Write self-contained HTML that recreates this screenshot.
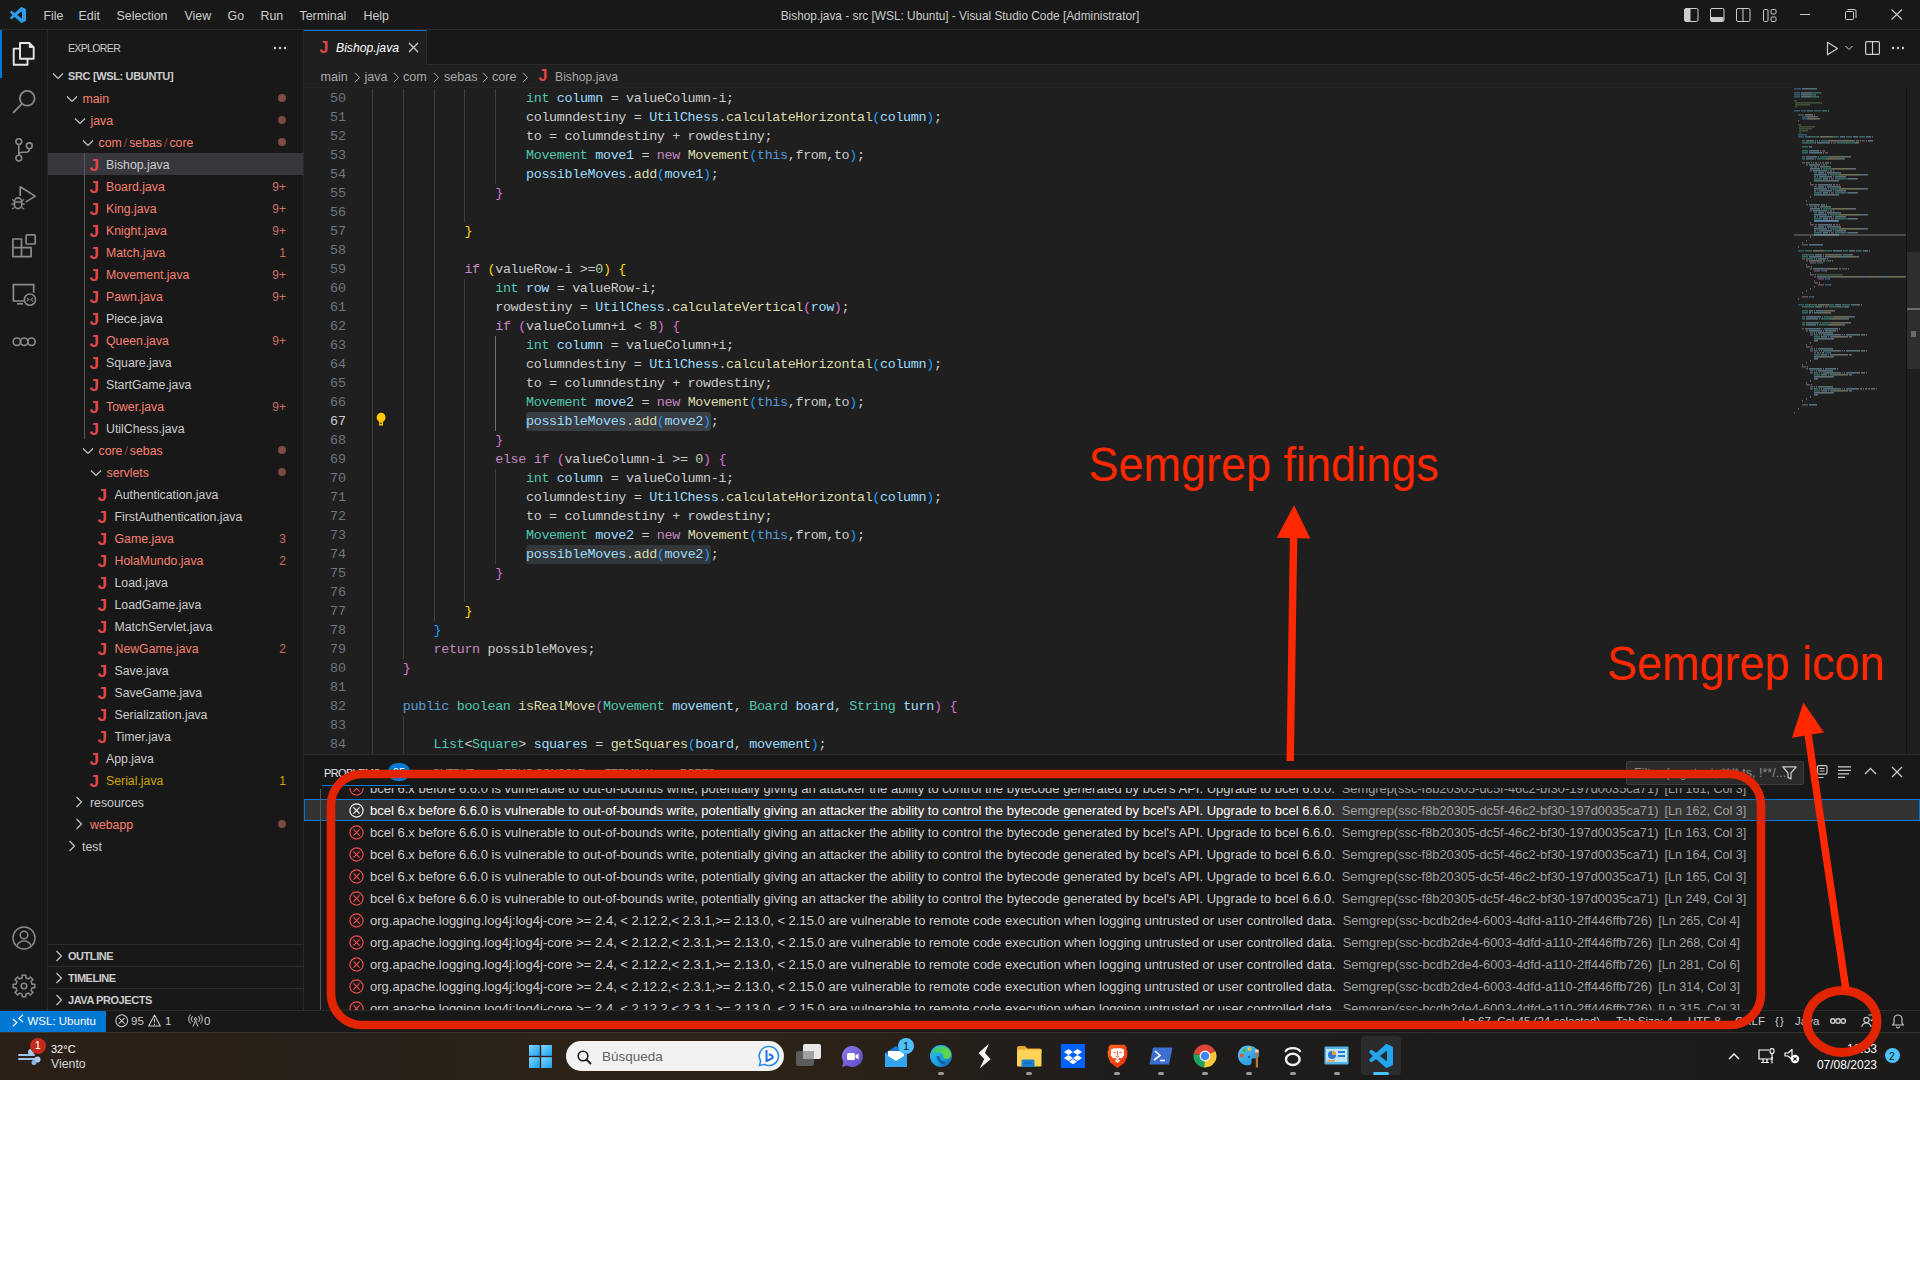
<!DOCTYPE html><html><head><meta charset="utf-8"><style>
*{box-sizing:border-box;margin:0;padding:0}
html,body{width:1920px;height:1280px;overflow:hidden;background:#fff}
body{position:relative;font-family:"Liberation Sans",sans-serif;color:#ccc}
.a{position:absolute;white-space:pre}
svg{position:absolute;overflow:visible}
#vs{left:0;top:0;width:1920px;height:1032px;background:#181818;overflow:hidden}
#title{left:0;top:0;width:1920px;height:30px;border-bottom:1px solid #2b2b2b;background:#181818}
#act{left:0;top:30px;width:48px;height:980px;border-right:1px solid #2b2b2b;background:#181818}
#side{left:48px;top:30px;width:256px;height:980px;border-right:1px solid #2b2b2b;background:#181818}
#tabs{left:304px;top:30px;width:1616px;height:35px;border-bottom:1px solid #2b2b2b;background:#181818}
#ed{left:304px;top:65px;width:1616px;height:689px;background:#1f1f1f}
#panel{left:304px;top:754px;width:1616px;height:256px;border-top:1px solid #2b2b2b;background:#181818}
#status{left:0;top:1010px;width:1920px;height:22px;border-top:1px solid #2b2b2b;background:#181818}
#task{left:0;top:1032px;width:1920px;height:48px;background:linear-gradient(90deg,#2a2017 0%,#2a2017 12%,#272019 17%,#2c2217 28%,#2d2216 40%,#2a2118 46%,#221e1b 53%,#1d1c1b 62%,#1c1b1a 100%)}
.menu{font-size:12.4px;color:#cccccc;line-height:16px}
.tree{font-size:12.3px;line-height:22px;height:22px}
.err{color:#f88070}
.warn{color:#cca700}
.code{font-family:"Liberation Mono",monospace;font-size:13.4px;line-height:19px;letter-spacing:-0.34px}
</style></head><body><div id="vs" class="a"><div id="title" class="a"></div>
<svg style="left:10px;top:7px" width="16" height="16" viewBox="0 0 100 100"><path d="M96.5 10.8 76 1c-2.4-1.2-5.2-.7-7.1 1.2L29.6 38 12.5 25c-1.6-1.2-3.8-1.1-5.3.2L1.7 30.2c-1.8 1.7-1.8 4.5 0 6.2L16.5 50 1.7 63.6c-1.8 1.7-1.8 4.5 0 6.2l5.5 5c1.5 1.3 3.7 1.4 5.3.2l17.1-13L68.9 97.8c1.9 1.9 4.7 2.4 7.1 1.2l20.5-9.9c2.1-1 3.5-3.2 3.5-5.6V16.4c0-2.4-1.4-4.6-3.5-5.6zM75 72.7 45.1 50 75 27.3v45.4z" fill="#2f9be8"/></svg>
<div class="a menu" style="left:43.5px;top:7.6px;">File</div>
<div class="a menu" style="left:78.5px;top:7.6px;">Edit</div>
<div class="a menu" style="left:116.5px;top:7.6px;">Selection</div>
<div class="a menu" style="left:184.5px;top:7.6px;">View</div>
<div class="a menu" style="left:227.5px;top:7.6px;">Go</div>
<div class="a menu" style="left:260.5px;top:7.6px;">Run</div>
<div class="a menu" style="left:299.5px;top:7.6px;">Terminal</div>
<div class="a menu" style="left:363.5px;top:7.6px;">Help</div>
<div class="a menu" style="left:0;width:1920px;text-align:center;top:8px;font-size:11.85px">Bishop.java - src [WSL: Ubuntu] - Visual Studio Code [Administrator]</div>
<svg style="left:1684px;top:8px" width="15" height="14"><rect x="0.5" y="0.5" width="13.5" height="13" rx="1.5" fill="none" stroke="#cccccc"/><rect x="1" y="1" width="5.5" height="12" fill="#cccccc"/></svg>
<svg style="left:1710px;top:8px" width="15" height="14"><rect x="0.5" y="0.5" width="13.5" height="13" rx="1.5" fill="none" stroke="#cccccc"/><rect x="1" y="9" width="12.5" height="4" fill="#cccccc"/></svg>
<svg style="left:1736px;top:8px" width="15" height="14"><rect x="0.5" y="0.5" width="13.5" height="13" rx="1.5" fill="none" stroke="#cccccc"/><line x1="7" y1="1" x2="7" y2="13" stroke="#cccccc"/></svg>
<svg style="left:1763px;top:9px" width="15" height="14"><rect x="0.5" y="0.5" width="4.5" height="12" rx="1.2" fill="none" stroke="#cccccc"/><rect x="8" y="0.5" width="5" height="4.5" rx="1.2" fill="none" stroke="#cccccc"/><rect x="8" y="8" width="5" height="4.5" rx="1.2" fill="none" stroke="#cccccc"/></svg>
<svg style="left:1800px;top:14px" width="11" height="2"><line x1="0" y1="0.5" x2="10" y2="0.5" stroke="#cccccc"/></svg>
<svg style="left:1845px;top:9px" width="12" height="11"><rect x="0.5" y="2.5" width="8" height="8" rx="1" fill="none" stroke="#cccccc"/><path d="M2.5 0.5h7a1.5 1.5 0 0 1 1.5 1.5v7" fill="none" stroke="#cccccc"/></svg>
<svg style="left:1891px;top:9px" width="12" height="11"><path d="M0.5 0.5l10.5 10M11 0.5 0.5 10.5" stroke="#cccccc" stroke-width="1.1"/></svg>
<div id="act" class="a"></div>
<div class="a" style="left:0;top:30px;width:2px;height:48px;background:#0078d4"></div>
<svg style="left:0;top:0" width="48" height="1010"><path d="M20 43h9.3l4.4 4.4v11.4H20z" fill="none" stroke="#e6e6e6" stroke-width="1.9" stroke-linejoin="round"/><path d="M29.3 43v4.4h4.4" fill="#e6e6e6" stroke="#e6e6e6" stroke-width="1"/><path d="M20 48.6h-6.3v16.1h13.8v-5.9" fill="none" stroke="#e6e6e6" stroke-width="1.9" stroke-linejoin="round"/><circle cx="27.2" cy="98.3" r="7.4" fill="none" stroke="#8a8a8a" stroke-width="1.8"/><path d="M21.8 103.8 13.7 112.4" stroke="#8a8a8a" stroke-width="1.9" stroke-linecap="round"/><circle cx="18.8" cy="141.6" r="2.9" fill="none" stroke="#8a8a8a" stroke-width="1.6"/><circle cx="29.3" cy="145.8" r="2.9" fill="none" stroke="#8a8a8a" stroke-width="1.6"/><circle cx="18.8" cy="158.1" r="2.9" fill="none" stroke="#8a8a8a" stroke-width="1.6"/><path d="M18.8 144.5v10.7M29.3 148.7c0 2.5-1 3.6-3.5 3.6h-3.5c-2.2 0-3.5 1-3.5 2.9" fill="none" stroke="#8a8a8a" stroke-width="1.6"/><path d="M20.2 196V186.8l15 9.3-9.6 6" fill="none" stroke="#8a8a8a" stroke-width="1.7" stroke-linejoin="round"/><path d="M14.5 201.5a3.6 3.6 0 0 1 7.2 0v3.5a3.6 3.6 0 0 1-7.2 0z" fill="none" stroke="#8a8a8a" stroke-width="1.6"/><path d="M12 199.5l2.5 1.5M12 209l2.5-1.5M24.2 199.5l-2.5 1.5M24.2 209l-2.5-1.5M11.5 204h3M21.7 204h3M14.5 202h7.2" stroke="#8a8a8a" stroke-width="1.3"/><path d="M12.9 239h8.6v8.6h-8.6zM12.9 247.6h8.6v9.1h-8.6zM21.5 247.6h9.6v9.1h-9.6z" fill="none" stroke="#8a8a8a" stroke-width="1.7" stroke-linejoin="round"/><rect x="26.1" y="234.9" width="9.1" height="9.1" rx="1" fill="none" stroke="#8a8a8a" stroke-width="1.7"/><path d="M24 301H13.4v-16.3h20.3v8" fill="none" stroke="#8a8a8a" stroke-width="1.7"/><path d="M17 303.8h6" stroke="#8a8a8a" stroke-width="1.7"/><circle cx="29.9" cy="299.6" r="5.6" fill="none" stroke="#8a8a8a" stroke-width="1.6"/><path d="M26.8 297.8l2 1.8-2 1.8M33 297.8l-2 1.8 2 1.8" fill="none" stroke="#8a8a8a" stroke-width="1.1"/><circle cx="16.9" cy="341.7" r="3.7" fill="none" stroke="#8a8a8a" stroke-width="1.7"/><circle cx="24.2" cy="341.7" r="3.7" fill="none" stroke="#8a8a8a" stroke-width="1.7"/><circle cx="31.5" cy="341.7" r="3.7" fill="none" stroke="#8a8a8a" stroke-width="1.7"/></svg>
<svg style="left:12px;top:926px" width="24" height="24" viewBox="0 0 24 24"><circle cx="12" cy="12" r="11" fill="none" stroke="#8a8a8a" stroke-width="1.5"/><circle cx="12" cy="9" r="3.8" fill="none" stroke="#8a8a8a" stroke-width="1.5"/><path d="M5 19.5c1.5-3 4-4.5 7-4.5s5.5 1.5 7 4.5" fill="none" stroke="#8a8a8a" stroke-width="1.5"/></svg>
<svg style="left:12px;top:974px" width="24" height="24" viewBox="0 0 24 24"><path d="M20.10 10.19 L22.84 10.14 L22.84 13.86 L20.10 13.81 L19.28 15.98 L19.01 16.45 L20.98 18.35 L18.35 20.98 L16.45 19.01 L14.34 19.96 L13.81 20.10 L13.86 22.84 L10.14 22.84 L10.19 20.10 L8.02 19.28 L7.55 19.01 L5.65 20.98 L3.02 18.35 L4.99 16.45 L4.04 14.34 L3.90 13.81 L1.16 13.86 L1.16 10.14 L3.90 10.19 L4.72 8.02 L4.99 7.55 L3.02 5.65 L5.65 3.02 L7.55 4.99 L9.66 4.04 L10.19 3.90 L10.14 1.16 L13.86 1.16 L13.81 3.90 L15.98 4.72 L16.45 4.99 L18.35 3.02 L20.98 5.65 L19.01 7.55 L19.96 9.66Z" fill="none" stroke="#8a8a8a" stroke-width="1.5" stroke-linejoin="round"/><circle cx="12" cy="12" r="2.8" fill="none" stroke="#8a8a8a" stroke-width="1.5"/></svg>
<div id="side" class="a"></div>
<div class="a " style="left:68px;top:41px;font-size:10.6px;line-height:14px;color:#cccccc;letter-spacing:-0.7px">EXPLORER</div>
<svg style="left:273px;top:46px" width="14" height="4"><circle cx="2" cy="2" r="1.2" fill="#ccc"/><circle cx="7" cy="2" r="1.2" fill="#ccc"/><circle cx="12" cy="2" r="1.2" fill="#ccc"/></svg>
<svg style="left:52px;top:72px" width="12" height="8"><path d="M1 1.5l5 5 5-5" fill="none" stroke="#cccccc" stroke-width="1.1"/></svg>
<div class="a tree" style="left:68px;top:65px;font-size:11px;font-weight:bold;color:#cccccc;letter-spacing:-0.35px">SRC [WSL: UBUNTU]</div>
<svg style="left:66px;top:95px" width="12" height="8"><path d="M1 1.5l5 5 5-5" fill="none" stroke="#cccccc" stroke-width="1.1"/></svg>
<div class="a tree" style="left:82.5px;top:88px;color:#f88070">main</div>
<div class="a" style="left:278px;top:94px;width:8px;height:8px;border-radius:4px;background:#7f4a40"></div>
<svg style="left:74px;top:117px" width="12" height="8"><path d="M1 1.5l5 5 5-5" fill="none" stroke="#cccccc" stroke-width="1.1"/></svg>
<div class="a tree" style="left:90.5px;top:110px;color:#f88070">java</div>
<div class="a" style="left:278px;top:116px;width:8px;height:8px;border-radius:4px;background:#7f4a40"></div>
<svg style="left:82px;top:139px" width="12" height="8"><path d="M1 1.5l5 5 5-5" fill="none" stroke="#cccccc" stroke-width="1.1"/></svg>
<div class="a tree" style="left:98.5px;top:132px;color:#f88070">com<span style="opacity:.45;margin:0 2px">/</span>sebas<span style="opacity:.45;margin:0 2px">/</span>core</div>
<div class="a" style="left:278px;top:138px;width:8px;height:8px;border-radius:4px;background:#7f4a40"></div>
<div class="a" style="left:48px;top:153px;width:255px;height:22px;background:#37373d"></div>
<div class="a" style="left:89.5px;top:156px;font-size:17px;line-height:19px;font-weight:bold;color:#e04848">J</div>
<div class="a tree" style="left:106px;top:154px;color:#cccccc">Bishop.java</div>
<div class="a" style="left:89.5px;top:178px;font-size:17px;line-height:19px;font-weight:bold;color:#e04848">J</div>
<div class="a tree" style="left:106px;top:176px;color:#f88070">Board.java</div>
<div class="a tree" style="left:200px;width:86px;text-align:right;top:176px;color:#cc6e60;font-size:12px">9+</div>
<div class="a" style="left:89.5px;top:200px;font-size:17px;line-height:19px;font-weight:bold;color:#e04848">J</div>
<div class="a tree" style="left:106px;top:198px;color:#f88070">King.java</div>
<div class="a tree" style="left:200px;width:86px;text-align:right;top:198px;color:#cc6e60;font-size:12px">9+</div>
<div class="a" style="left:89.5px;top:222px;font-size:17px;line-height:19px;font-weight:bold;color:#e04848">J</div>
<div class="a tree" style="left:106px;top:220px;color:#f88070">Knight.java</div>
<div class="a tree" style="left:200px;width:86px;text-align:right;top:220px;color:#cc6e60;font-size:12px">9+</div>
<div class="a" style="left:89.5px;top:244px;font-size:17px;line-height:19px;font-weight:bold;color:#e04848">J</div>
<div class="a tree" style="left:106px;top:242px;color:#f88070">Match.java</div>
<div class="a tree" style="left:200px;width:86px;text-align:right;top:242px;color:#cc6e60;font-size:12px">1</div>
<div class="a" style="left:89.5px;top:266px;font-size:17px;line-height:19px;font-weight:bold;color:#e04848">J</div>
<div class="a tree" style="left:106px;top:264px;color:#f88070">Movement.java</div>
<div class="a tree" style="left:200px;width:86px;text-align:right;top:264px;color:#cc6e60;font-size:12px">9+</div>
<div class="a" style="left:89.5px;top:288px;font-size:17px;line-height:19px;font-weight:bold;color:#e04848">J</div>
<div class="a tree" style="left:106px;top:286px;color:#f88070">Pawn.java</div>
<div class="a tree" style="left:200px;width:86px;text-align:right;top:286px;color:#cc6e60;font-size:12px">9+</div>
<div class="a" style="left:89.5px;top:310px;font-size:17px;line-height:19px;font-weight:bold;color:#e04848">J</div>
<div class="a tree" style="left:106px;top:308px;color:#cccccc">Piece.java</div>
<div class="a" style="left:89.5px;top:332px;font-size:17px;line-height:19px;font-weight:bold;color:#e04848">J</div>
<div class="a tree" style="left:106px;top:330px;color:#f88070">Queen.java</div>
<div class="a tree" style="left:200px;width:86px;text-align:right;top:330px;color:#cc6e60;font-size:12px">9+</div>
<div class="a" style="left:89.5px;top:354px;font-size:17px;line-height:19px;font-weight:bold;color:#e04848">J</div>
<div class="a tree" style="left:106px;top:352px;color:#cccccc">Square.java</div>
<div class="a" style="left:89.5px;top:376px;font-size:17px;line-height:19px;font-weight:bold;color:#e04848">J</div>
<div class="a tree" style="left:106px;top:374px;color:#cccccc">StartGame.java</div>
<div class="a" style="left:89.5px;top:398px;font-size:17px;line-height:19px;font-weight:bold;color:#e04848">J</div>
<div class="a tree" style="left:106px;top:396px;color:#f88070">Tower.java</div>
<div class="a tree" style="left:200px;width:86px;text-align:right;top:396px;color:#cc6e60;font-size:12px">9+</div>
<div class="a" style="left:89.5px;top:420px;font-size:17px;line-height:19px;font-weight:bold;color:#e04848">J</div>
<div class="a tree" style="left:106px;top:418px;color:#cccccc">UtilChess.java</div>
<svg style="left:82px;top:447px" width="12" height="8"><path d="M1 1.5l5 5 5-5" fill="none" stroke="#cccccc" stroke-width="1.1"/></svg>
<div class="a tree" style="left:98.5px;top:440px;color:#f88070">core<span style="opacity:.45;margin:0 2px">/</span>sebas</div>
<div class="a" style="left:278px;top:446px;width:8px;height:8px;border-radius:4px;background:#7f4a40"></div>
<svg style="left:90px;top:469px" width="12" height="8"><path d="M1 1.5l5 5 5-5" fill="none" stroke="#cccccc" stroke-width="1.1"/></svg>
<div class="a tree" style="left:106.5px;top:462px;color:#f88070">servlets</div>
<div class="a" style="left:278px;top:468px;width:8px;height:8px;border-radius:4px;background:#7f4a40"></div>
<div class="a" style="left:97.5px;top:486px;font-size:17px;line-height:19px;font-weight:bold;color:#e04848">J</div>
<div class="a tree" style="left:114.5px;top:484px;color:#cccccc">Authentication.java</div>
<div class="a" style="left:97.5px;top:508px;font-size:17px;line-height:19px;font-weight:bold;color:#e04848">J</div>
<div class="a tree" style="left:114.5px;top:506px;color:#cccccc">FirstAuthentication.java</div>
<div class="a" style="left:97.5px;top:530px;font-size:17px;line-height:19px;font-weight:bold;color:#e04848">J</div>
<div class="a tree" style="left:114.5px;top:528px;color:#f88070">Game.java</div>
<div class="a tree" style="left:200px;width:86px;text-align:right;top:528px;color:#cc6e60;font-size:12px">3</div>
<div class="a" style="left:97.5px;top:552px;font-size:17px;line-height:19px;font-weight:bold;color:#e04848">J</div>
<div class="a tree" style="left:114.5px;top:550px;color:#f88070">HolaMundo.java</div>
<div class="a tree" style="left:200px;width:86px;text-align:right;top:550px;color:#cc6e60;font-size:12px">2</div>
<div class="a" style="left:97.5px;top:574px;font-size:17px;line-height:19px;font-weight:bold;color:#e04848">J</div>
<div class="a tree" style="left:114.5px;top:572px;color:#cccccc">Load.java</div>
<div class="a" style="left:97.5px;top:596px;font-size:17px;line-height:19px;font-weight:bold;color:#e04848">J</div>
<div class="a tree" style="left:114.5px;top:594px;color:#cccccc">LoadGame.java</div>
<div class="a" style="left:97.5px;top:618px;font-size:17px;line-height:19px;font-weight:bold;color:#e04848">J</div>
<div class="a tree" style="left:114.5px;top:616px;color:#cccccc">MatchServlet.java</div>
<div class="a" style="left:97.5px;top:640px;font-size:17px;line-height:19px;font-weight:bold;color:#e04848">J</div>
<div class="a tree" style="left:114.5px;top:638px;color:#f88070">NewGame.java</div>
<div class="a tree" style="left:200px;width:86px;text-align:right;top:638px;color:#cc6e60;font-size:12px">2</div>
<div class="a" style="left:97.5px;top:662px;font-size:17px;line-height:19px;font-weight:bold;color:#e04848">J</div>
<div class="a tree" style="left:114.5px;top:660px;color:#cccccc">Save.java</div>
<div class="a" style="left:97.5px;top:684px;font-size:17px;line-height:19px;font-weight:bold;color:#e04848">J</div>
<div class="a tree" style="left:114.5px;top:682px;color:#cccccc">SaveGame.java</div>
<div class="a" style="left:97.5px;top:706px;font-size:17px;line-height:19px;font-weight:bold;color:#e04848">J</div>
<div class="a tree" style="left:114.5px;top:704px;color:#cccccc">Serialization.java</div>
<div class="a" style="left:97.5px;top:728px;font-size:17px;line-height:19px;font-weight:bold;color:#e04848">J</div>
<div class="a tree" style="left:114.5px;top:726px;color:#cccccc">Timer.java</div>
<div class="a" style="left:89.5px;top:750px;font-size:17px;line-height:19px;font-weight:bold;color:#e04848">J</div>
<div class="a tree" style="left:106px;top:748px;color:#cccccc">App.java</div>
<div class="a" style="left:89.5px;top:772px;font-size:17px;line-height:19px;font-weight:bold;color:#e04848">J</div>
<div class="a tree" style="left:106px;top:770px;color:#cca700">Serial.java</div>
<div class="a tree" style="left:200px;width:86px;text-align:right;top:770px;color:#cca700;font-size:12px">1</div>
<svg style="left:74.5px;top:796px" width="8" height="12"><path d="M1.5 1l5 5-5 5" fill="none" stroke="#cccccc" stroke-width="1.1"/></svg>
<div class="a tree" style="left:90px;top:792px;color:#cccccc">resources</div>
<svg style="left:74.5px;top:818px" width="8" height="12"><path d="M1.5 1l5 5-5 5" fill="none" stroke="#cccccc" stroke-width="1.1"/></svg>
<div class="a tree" style="left:90px;top:814px;color:#f88070">webapp</div>
<div class="a" style="left:278px;top:820px;width:8px;height:8px;border-radius:4px;background:#7f4a40"></div>
<svg style="left:67.5px;top:840px" width="8" height="12"><path d="M1.5 1l5 5-5 5" fill="none" stroke="#cccccc" stroke-width="1.1"/></svg>
<div class="a tree" style="left:82px;top:836px;color:#cccccc">test</div>
<div class="a" style="left:84px;top:153px;width:1px;height:286px;background:#585858"></div>
<div class="a" style="left:48px;top:944px;width:255px;height:1px;background:#2b2b2b"></div>
<svg style="left:55px;top:950px" width="8" height="12"><path d="M1.5 1l5 5-5 5" fill="none" stroke="#cccccc" stroke-width="1.1"/></svg>
<div class="a tree" style="left:68px;top:945px;font-size:11px;font-weight:bold;color:#cccccc;letter-spacing:-0.45px">OUTLINE</div>
<div class="a" style="left:48px;top:966px;width:255px;height:1px;background:#2b2b2b"></div>
<svg style="left:55px;top:972px" width="8" height="12"><path d="M1.5 1l5 5-5 5" fill="none" stroke="#cccccc" stroke-width="1.1"/></svg>
<div class="a tree" style="left:68px;top:967px;font-size:11px;font-weight:bold;color:#cccccc;letter-spacing:-0.45px">TIMELINE</div>
<div class="a" style="left:48px;top:988px;width:255px;height:1px;background:#2b2b2b"></div>
<svg style="left:55px;top:994px" width="8" height="12"><path d="M1.5 1l5 5-5 5" fill="none" stroke="#cccccc" stroke-width="1.1"/></svg>
<div class="a tree" style="left:68px;top:989px;font-size:11px;font-weight:bold;color:#cccccc;letter-spacing:-0.45px">JAVA PROJECTS</div>
<div id="tabs" class="a"></div>
<div class="a" style="left:304px;top:30px;width:123px;height:35px;background:#1f1f1f;border-top:1px solid #0078d4;border-right:1px solid #2b2b2b"></div>
<div class="a" style="left:319.5px;top:38.5px;font-size:16px;line-height:18px;font-weight:bold;color:#e04848">J</div>
<div class="a " style="left:336px;top:40px;font-size:12.2px;line-height:16px;font-style:italic;color:#ffffff">Bishop.java</div>
<svg style="left:408px;top:42px" width="11" height="11"><path d="M1 1l9 9M10 1 1 10" stroke="#cccccc" stroke-width="1.3"/></svg>
<svg style="left:1826px;top:41px" width="13" height="15"><path d="M1.5 1.2v12.6l10-6.3z" fill="none" stroke="#cccccc" stroke-width="1.2" stroke-linejoin="round"/></svg>
<svg style="left:1845px;top:45px" width="8" height="6"><path d="M0.5 1l3.5 3.5 3.5-3.5" fill="none" stroke="#cccccc" stroke-width="1"/></svg>
<svg style="left:1865px;top:41px" width="15" height="14"><rect x="0.6" y="0.6" width="13.8" height="12.8" rx="1.2" fill="none" stroke="#cccccc" stroke-width="1.2"/><line x1="7.5" y1="1" x2="7.5" y2="13" stroke="#cccccc" stroke-width="1.2"/></svg>
<svg style="left:1891px;top:46px" width="14" height="4"><circle cx="2" cy="2" r="1.2" fill="#cccccc"/><circle cx="7" cy="2" r="1.2" fill="#cccccc"/><circle cx="12" cy="2" r="1.2" fill="#cccccc"/></svg>
<div id="ed" class="a"></div>
<div class="a " style="left:320.5px;top:69px;font-size:12.6px;line-height:16px;color:#a9a9a9">main</div>
<div class="a " style="left:364.5px;top:69px;font-size:12.6px;line-height:16px;color:#a9a9a9">java</div>
<div class="a " style="left:403px;top:69px;font-size:12.6px;line-height:16px;color:#a9a9a9">com</div>
<div class="a " style="left:444px;top:69px;font-size:12.6px;line-height:16px;color:#a9a9a9">sebas</div>
<div class="a " style="left:492px;top:69px;font-size:12.6px;line-height:16px;color:#a9a9a9">core</div>
<svg style="left:354px;top:72px" width="7" height="11"><path d="M1 0.8l4.5 4.7L1 10.2" fill="none" stroke="#a9a9a9" stroke-width="1"/></svg>
<svg style="left:392.5px;top:72px" width="7" height="11"><path d="M1 0.8l4.5 4.7L1 10.2" fill="none" stroke="#a9a9a9" stroke-width="1"/></svg>
<svg style="left:433px;top:72px" width="7" height="11"><path d="M1 0.8l4.5 4.7L1 10.2" fill="none" stroke="#a9a9a9" stroke-width="1"/></svg>
<svg style="left:482px;top:72px" width="7" height="11"><path d="M1 0.8l4.5 4.7L1 10.2" fill="none" stroke="#a9a9a9" stroke-width="1"/></svg>
<svg style="left:522px;top:72px" width="7" height="11"><path d="M1 0.8l4.5 4.7L1 10.2" fill="none" stroke="#a9a9a9" stroke-width="1"/></svg>
<div class="a" style="left:538.5px;top:66.5px;font-size:16px;line-height:18px;font-weight:bold;color:#e04848">J</div>
<div class="a " style="left:555px;top:69px;font-size:12.2px;line-height:16px;color:#a9a9a9">Bishop.java</div>
<div class="a" style="left:304px;top:87px;width:1490px;height:1px;background:#232527"></div>
<div class="a code" style="left:300px;width:46px;text-align:right;top:89px;color:#6e7681;letter-spacing:0">50</div>
<div class="a" style="left:372.0px;top:89px;width:1px;height:19px;background:#404040"></div>
<div class="a" style="left:402.8px;top:89px;width:1px;height:19px;background:#404040"></div>
<div class="a" style="left:433.6px;top:89px;width:1px;height:19px;background:#404040"></div>
<div class="a" style="left:464.4px;top:89px;width:1px;height:19px;background:#404040"></div>
<div class="a" style="left:495.2px;top:89px;width:1px;height:19px;background:#404040"></div>
<div class="a code" style="left:300px;width:46px;text-align:right;top:108px;color:#6e7681;letter-spacing:0">51</div>
<div class="a" style="left:372.0px;top:108px;width:1px;height:19px;background:#404040"></div>
<div class="a" style="left:402.8px;top:108px;width:1px;height:19px;background:#404040"></div>
<div class="a" style="left:433.6px;top:108px;width:1px;height:19px;background:#404040"></div>
<div class="a" style="left:464.4px;top:108px;width:1px;height:19px;background:#404040"></div>
<div class="a" style="left:495.2px;top:108px;width:1px;height:19px;background:#404040"></div>
<div class="a code" style="left:300px;width:46px;text-align:right;top:127px;color:#6e7681;letter-spacing:0">52</div>
<div class="a" style="left:372.0px;top:127px;width:1px;height:19px;background:#404040"></div>
<div class="a" style="left:402.8px;top:127px;width:1px;height:19px;background:#404040"></div>
<div class="a" style="left:433.6px;top:127px;width:1px;height:19px;background:#404040"></div>
<div class="a" style="left:464.4px;top:127px;width:1px;height:19px;background:#404040"></div>
<div class="a" style="left:495.2px;top:127px;width:1px;height:19px;background:#404040"></div>
<div class="a code" style="left:300px;width:46px;text-align:right;top:146px;color:#6e7681;letter-spacing:0">53</div>
<div class="a" style="left:372.0px;top:146px;width:1px;height:19px;background:#404040"></div>
<div class="a" style="left:402.8px;top:146px;width:1px;height:19px;background:#404040"></div>
<div class="a" style="left:433.6px;top:146px;width:1px;height:19px;background:#404040"></div>
<div class="a" style="left:464.4px;top:146px;width:1px;height:19px;background:#404040"></div>
<div class="a" style="left:495.2px;top:146px;width:1px;height:19px;background:#404040"></div>
<div class="a code" style="left:300px;width:46px;text-align:right;top:165px;color:#6e7681;letter-spacing:0">54</div>
<div class="a" style="left:372.0px;top:165px;width:1px;height:19px;background:#404040"></div>
<div class="a" style="left:402.8px;top:165px;width:1px;height:19px;background:#404040"></div>
<div class="a" style="left:433.6px;top:165px;width:1px;height:19px;background:#404040"></div>
<div class="a" style="left:464.4px;top:165px;width:1px;height:19px;background:#404040"></div>
<div class="a" style="left:495.2px;top:165px;width:1px;height:19px;background:#404040"></div>
<div class="a code" style="left:300px;width:46px;text-align:right;top:184px;color:#6e7681;letter-spacing:0">55</div>
<div class="a" style="left:372.0px;top:184px;width:1px;height:19px;background:#404040"></div>
<div class="a" style="left:402.8px;top:184px;width:1px;height:19px;background:#404040"></div>
<div class="a" style="left:433.6px;top:184px;width:1px;height:19px;background:#404040"></div>
<div class="a" style="left:464.4px;top:184px;width:1px;height:19px;background:#404040"></div>
<div class="a code" style="left:300px;width:46px;text-align:right;top:203px;color:#6e7681;letter-spacing:0">56</div>
<div class="a" style="left:372.0px;top:203px;width:1px;height:19px;background:#404040"></div>
<div class="a" style="left:402.8px;top:203px;width:1px;height:19px;background:#404040"></div>
<div class="a" style="left:433.6px;top:203px;width:1px;height:19px;background:#404040"></div>
<div class="a" style="left:464.4px;top:203px;width:1px;height:19px;background:#404040"></div>
<div class="a code" style="left:300px;width:46px;text-align:right;top:222px;color:#6e7681;letter-spacing:0">57</div>
<div class="a" style="left:372.0px;top:222px;width:1px;height:19px;background:#404040"></div>
<div class="a" style="left:402.8px;top:222px;width:1px;height:19px;background:#404040"></div>
<div class="a" style="left:433.6px;top:222px;width:1px;height:19px;background:#404040"></div>
<div class="a code" style="left:300px;width:46px;text-align:right;top:241px;color:#6e7681;letter-spacing:0">58</div>
<div class="a" style="left:372.0px;top:241px;width:1px;height:19px;background:#404040"></div>
<div class="a" style="left:402.8px;top:241px;width:1px;height:19px;background:#404040"></div>
<div class="a" style="left:433.6px;top:241px;width:1px;height:19px;background:#404040"></div>
<div class="a code" style="left:300px;width:46px;text-align:right;top:260px;color:#6e7681;letter-spacing:0">59</div>
<div class="a" style="left:372.0px;top:260px;width:1px;height:19px;background:#404040"></div>
<div class="a" style="left:402.8px;top:260px;width:1px;height:19px;background:#404040"></div>
<div class="a" style="left:433.6px;top:260px;width:1px;height:19px;background:#404040"></div>
<div class="a code" style="left:300px;width:46px;text-align:right;top:279px;color:#6e7681;letter-spacing:0">60</div>
<div class="a" style="left:372.0px;top:279px;width:1px;height:19px;background:#404040"></div>
<div class="a" style="left:402.8px;top:279px;width:1px;height:19px;background:#404040"></div>
<div class="a" style="left:433.6px;top:279px;width:1px;height:19px;background:#404040"></div>
<div class="a" style="left:464.4px;top:279px;width:1px;height:19px;background:#404040"></div>
<div class="a code" style="left:300px;width:46px;text-align:right;top:298px;color:#6e7681;letter-spacing:0">61</div>
<div class="a" style="left:372.0px;top:298px;width:1px;height:19px;background:#404040"></div>
<div class="a" style="left:402.8px;top:298px;width:1px;height:19px;background:#404040"></div>
<div class="a" style="left:433.6px;top:298px;width:1px;height:19px;background:#404040"></div>
<div class="a" style="left:464.4px;top:298px;width:1px;height:19px;background:#404040"></div>
<div class="a code" style="left:300px;width:46px;text-align:right;top:317px;color:#6e7681;letter-spacing:0">62</div>
<div class="a" style="left:372.0px;top:317px;width:1px;height:19px;background:#404040"></div>
<div class="a" style="left:402.8px;top:317px;width:1px;height:19px;background:#404040"></div>
<div class="a" style="left:433.6px;top:317px;width:1px;height:19px;background:#404040"></div>
<div class="a" style="left:464.4px;top:317px;width:1px;height:19px;background:#404040"></div>
<div class="a code" style="left:300px;width:46px;text-align:right;top:336px;color:#6e7681;letter-spacing:0">63</div>
<div class="a" style="left:372.0px;top:336px;width:1px;height:19px;background:#404040"></div>
<div class="a" style="left:402.8px;top:336px;width:1px;height:19px;background:#404040"></div>
<div class="a" style="left:433.6px;top:336px;width:1px;height:19px;background:#404040"></div>
<div class="a" style="left:464.4px;top:336px;width:1px;height:19px;background:#404040"></div>
<div class="a" style="left:495.2px;top:336px;width:1px;height:19px;background:#707070"></div>
<div class="a code" style="left:300px;width:46px;text-align:right;top:355px;color:#6e7681;letter-spacing:0">64</div>
<div class="a" style="left:372.0px;top:355px;width:1px;height:19px;background:#404040"></div>
<div class="a" style="left:402.8px;top:355px;width:1px;height:19px;background:#404040"></div>
<div class="a" style="left:433.6px;top:355px;width:1px;height:19px;background:#404040"></div>
<div class="a" style="left:464.4px;top:355px;width:1px;height:19px;background:#404040"></div>
<div class="a" style="left:495.2px;top:355px;width:1px;height:19px;background:#707070"></div>
<div class="a code" style="left:300px;width:46px;text-align:right;top:374px;color:#6e7681;letter-spacing:0">65</div>
<div class="a" style="left:372.0px;top:374px;width:1px;height:19px;background:#404040"></div>
<div class="a" style="left:402.8px;top:374px;width:1px;height:19px;background:#404040"></div>
<div class="a" style="left:433.6px;top:374px;width:1px;height:19px;background:#404040"></div>
<div class="a" style="left:464.4px;top:374px;width:1px;height:19px;background:#404040"></div>
<div class="a" style="left:495.2px;top:374px;width:1px;height:19px;background:#707070"></div>
<div class="a code" style="left:300px;width:46px;text-align:right;top:393px;color:#6e7681;letter-spacing:0">66</div>
<div class="a" style="left:372.0px;top:393px;width:1px;height:19px;background:#404040"></div>
<div class="a" style="left:402.8px;top:393px;width:1px;height:19px;background:#404040"></div>
<div class="a" style="left:433.6px;top:393px;width:1px;height:19px;background:#404040"></div>
<div class="a" style="left:464.4px;top:393px;width:1px;height:19px;background:#404040"></div>
<div class="a" style="left:495.2px;top:393px;width:1px;height:19px;background:#707070"></div>
<div class="a code" style="left:300px;width:46px;text-align:right;top:412px;color:#cccccc;letter-spacing:0">67</div>
<div class="a" style="left:372.0px;top:412px;width:1px;height:19px;background:#404040"></div>
<div class="a" style="left:402.8px;top:412px;width:1px;height:19px;background:#404040"></div>
<div class="a" style="left:433.6px;top:412px;width:1px;height:19px;background:#404040"></div>
<div class="a" style="left:464.4px;top:412px;width:1px;height:19px;background:#404040"></div>
<div class="a" style="left:495.2px;top:412px;width:1px;height:19px;background:#707070"></div>
<div class="a code" style="left:300px;width:46px;text-align:right;top:431px;color:#6e7681;letter-spacing:0">68</div>
<div class="a" style="left:372.0px;top:431px;width:1px;height:19px;background:#404040"></div>
<div class="a" style="left:402.8px;top:431px;width:1px;height:19px;background:#404040"></div>
<div class="a" style="left:433.6px;top:431px;width:1px;height:19px;background:#404040"></div>
<div class="a" style="left:464.4px;top:431px;width:1px;height:19px;background:#404040"></div>
<div class="a code" style="left:300px;width:46px;text-align:right;top:450px;color:#6e7681;letter-spacing:0">69</div>
<div class="a" style="left:372.0px;top:450px;width:1px;height:19px;background:#404040"></div>
<div class="a" style="left:402.8px;top:450px;width:1px;height:19px;background:#404040"></div>
<div class="a" style="left:433.6px;top:450px;width:1px;height:19px;background:#404040"></div>
<div class="a" style="left:464.4px;top:450px;width:1px;height:19px;background:#404040"></div>
<div class="a code" style="left:300px;width:46px;text-align:right;top:469px;color:#6e7681;letter-spacing:0">70</div>
<div class="a" style="left:372.0px;top:469px;width:1px;height:19px;background:#404040"></div>
<div class="a" style="left:402.8px;top:469px;width:1px;height:19px;background:#404040"></div>
<div class="a" style="left:433.6px;top:469px;width:1px;height:19px;background:#404040"></div>
<div class="a" style="left:464.4px;top:469px;width:1px;height:19px;background:#404040"></div>
<div class="a" style="left:495.2px;top:469px;width:1px;height:19px;background:#404040"></div>
<div class="a code" style="left:300px;width:46px;text-align:right;top:488px;color:#6e7681;letter-spacing:0">71</div>
<div class="a" style="left:372.0px;top:488px;width:1px;height:19px;background:#404040"></div>
<div class="a" style="left:402.8px;top:488px;width:1px;height:19px;background:#404040"></div>
<div class="a" style="left:433.6px;top:488px;width:1px;height:19px;background:#404040"></div>
<div class="a" style="left:464.4px;top:488px;width:1px;height:19px;background:#404040"></div>
<div class="a" style="left:495.2px;top:488px;width:1px;height:19px;background:#404040"></div>
<div class="a code" style="left:300px;width:46px;text-align:right;top:507px;color:#6e7681;letter-spacing:0">72</div>
<div class="a" style="left:372.0px;top:507px;width:1px;height:19px;background:#404040"></div>
<div class="a" style="left:402.8px;top:507px;width:1px;height:19px;background:#404040"></div>
<div class="a" style="left:433.6px;top:507px;width:1px;height:19px;background:#404040"></div>
<div class="a" style="left:464.4px;top:507px;width:1px;height:19px;background:#404040"></div>
<div class="a" style="left:495.2px;top:507px;width:1px;height:19px;background:#404040"></div>
<div class="a code" style="left:300px;width:46px;text-align:right;top:526px;color:#6e7681;letter-spacing:0">73</div>
<div class="a" style="left:372.0px;top:526px;width:1px;height:19px;background:#404040"></div>
<div class="a" style="left:402.8px;top:526px;width:1px;height:19px;background:#404040"></div>
<div class="a" style="left:433.6px;top:526px;width:1px;height:19px;background:#404040"></div>
<div class="a" style="left:464.4px;top:526px;width:1px;height:19px;background:#404040"></div>
<div class="a" style="left:495.2px;top:526px;width:1px;height:19px;background:#404040"></div>
<div class="a code" style="left:300px;width:46px;text-align:right;top:545px;color:#6e7681;letter-spacing:0">74</div>
<div class="a" style="left:372.0px;top:545px;width:1px;height:19px;background:#404040"></div>
<div class="a" style="left:402.8px;top:545px;width:1px;height:19px;background:#404040"></div>
<div class="a" style="left:433.6px;top:545px;width:1px;height:19px;background:#404040"></div>
<div class="a" style="left:464.4px;top:545px;width:1px;height:19px;background:#404040"></div>
<div class="a" style="left:495.2px;top:545px;width:1px;height:19px;background:#404040"></div>
<div class="a code" style="left:300px;width:46px;text-align:right;top:564px;color:#6e7681;letter-spacing:0">75</div>
<div class="a" style="left:372.0px;top:564px;width:1px;height:19px;background:#404040"></div>
<div class="a" style="left:402.8px;top:564px;width:1px;height:19px;background:#404040"></div>
<div class="a" style="left:433.6px;top:564px;width:1px;height:19px;background:#404040"></div>
<div class="a" style="left:464.4px;top:564px;width:1px;height:19px;background:#404040"></div>
<div class="a code" style="left:300px;width:46px;text-align:right;top:583px;color:#6e7681;letter-spacing:0">76</div>
<div class="a" style="left:372.0px;top:583px;width:1px;height:19px;background:#404040"></div>
<div class="a" style="left:402.8px;top:583px;width:1px;height:19px;background:#404040"></div>
<div class="a" style="left:433.6px;top:583px;width:1px;height:19px;background:#404040"></div>
<div class="a" style="left:464.4px;top:583px;width:1px;height:19px;background:#404040"></div>
<div class="a code" style="left:300px;width:46px;text-align:right;top:602px;color:#6e7681;letter-spacing:0">77</div>
<div class="a" style="left:372.0px;top:602px;width:1px;height:19px;background:#404040"></div>
<div class="a" style="left:402.8px;top:602px;width:1px;height:19px;background:#404040"></div>
<div class="a" style="left:433.6px;top:602px;width:1px;height:19px;background:#404040"></div>
<div class="a code" style="left:300px;width:46px;text-align:right;top:621px;color:#6e7681;letter-spacing:0">78</div>
<div class="a" style="left:372.0px;top:621px;width:1px;height:19px;background:#404040"></div>
<div class="a" style="left:402.8px;top:621px;width:1px;height:19px;background:#404040"></div>
<div class="a code" style="left:300px;width:46px;text-align:right;top:640px;color:#6e7681;letter-spacing:0">79</div>
<div class="a" style="left:372.0px;top:640px;width:1px;height:19px;background:#404040"></div>
<div class="a" style="left:402.8px;top:640px;width:1px;height:19px;background:#404040"></div>
<div class="a code" style="left:300px;width:46px;text-align:right;top:659px;color:#6e7681;letter-spacing:0">80</div>
<div class="a" style="left:372.0px;top:659px;width:1px;height:19px;background:#404040"></div>
<div class="a code" style="left:300px;width:46px;text-align:right;top:678px;color:#6e7681;letter-spacing:0">81</div>
<div class="a" style="left:372.0px;top:678px;width:1px;height:19px;background:#404040"></div>
<div class="a code" style="left:300px;width:46px;text-align:right;top:697px;color:#6e7681;letter-spacing:0">82</div>
<div class="a" style="left:372.0px;top:697px;width:1px;height:19px;background:#404040"></div>
<div class="a code" style="left:300px;width:46px;text-align:right;top:716px;color:#6e7681;letter-spacing:0">83</div>
<div class="a" style="left:372.0px;top:716px;width:1px;height:19px;background:#404040"></div>
<div class="a" style="left:402.8px;top:716px;width:1px;height:19px;background:#404040"></div>
<div class="a code" style="left:300px;width:46px;text-align:right;top:735px;color:#6e7681;letter-spacing:0">84</div>
<div class="a" style="left:372.0px;top:735px;width:1px;height:19px;background:#404040"></div>
<div class="a" style="left:402.8px;top:735px;width:1px;height:19px;background:#404040"></div>
<div class="a" style="left:526.0px;top:412px;width:184.8px;height:19px;background:#3a3d41;border-radius:3px"></div>
<div class="a" style="left:526.0px;top:545px;width:184.8px;height:19px;background:#343739;border-radius:3px"></div>
<div class="a code" style="left:526.0px;top:89px"><span style="color:#4ec9b0">int</span><span style="color:#9cdcfe"> column</span><span style="color:#cccccc"> = valueColumn-i;</span></div>
<div class="a code" style="left:526.0px;top:108px"><span style="color:#cccccc">columndestiny = </span><span style="color:#9cdcfe">UtilChess</span><span style="color:#cccccc">.</span><span style="color:#dcdcaa">calculateHorizontal</span><span style="color:#179fff">(</span><span style="color:#9cdcfe">column</span><span style="color:#179fff">)</span><span style="color:#cccccc">;</span></div>
<div class="a code" style="left:526.0px;top:127px"><span style="color:#cccccc">to = columndestiny + rowdestiny;</span></div>
<div class="a code" style="left:526.0px;top:146px"><span style="color:#4ec9b0">Movement</span><span style="color:#9cdcfe"> move1</span><span style="color:#cccccc"> = </span><span style="color:#c586c0">new</span><span style="color:#cccccc"> </span><span style="color:#dcdcaa">Movement</span><span style="color:#179fff">(</span><span style="color:#569cd6">this</span><span style="color:#cccccc">,from,to</span><span style="color:#179fff">)</span><span style="color:#cccccc">;</span></div>
<div class="a code" style="left:526.0px;top:165px"><span style="color:#9cdcfe">possibleMoves</span><span style="color:#cccccc">.</span><span style="color:#dcdcaa">add</span><span style="color:#179fff">(</span><span style="color:#9cdcfe">move1</span><span style="color:#179fff">)</span><span style="color:#cccccc">;</span></div>
<div class="a code" style="left:495.2px;top:184px"><span style="color:#da70d6">}</span></div>
<div class="a code" style="left:464.4px;top:222px"><span style="color:#ffd700">}</span></div>
<div class="a code" style="left:464.4px;top:260px"><span style="color:#c586c0">if</span><span style="color:#cccccc"> </span><span style="color:#ffd700">(</span><span style="color:#cccccc">valueRow-i &gt;=</span><span style="color:#b5cea8">0</span><span style="color:#ffd700">)</span><span style="color:#cccccc"> </span><span style="color:#ffd700">{</span></div>
<div class="a code" style="left:495.2px;top:279px"><span style="color:#4ec9b0">int</span><span style="color:#9cdcfe"> row</span><span style="color:#cccccc"> = valueRow-i;</span></div>
<div class="a code" style="left:495.2px;top:298px"><span style="color:#cccccc">rowdestiny = </span><span style="color:#9cdcfe">UtilChess</span><span style="color:#cccccc">.</span><span style="color:#dcdcaa">calculateVertical</span><span style="color:#da70d6">(</span><span style="color:#9cdcfe">row</span><span style="color:#da70d6">)</span><span style="color:#cccccc">;</span></div>
<div class="a code" style="left:495.2px;top:317px"><span style="color:#c586c0">if</span><span style="color:#cccccc"> </span><span style="color:#da70d6">(</span><span style="color:#cccccc">valueColumn+i &lt; </span><span style="color:#b5cea8">8</span><span style="color:#da70d6">)</span><span style="color:#cccccc"> </span><span style="color:#da70d6">{</span></div>
<div class="a code" style="left:526.0px;top:336px"><span style="color:#4ec9b0">int</span><span style="color:#9cdcfe"> column</span><span style="color:#cccccc"> = valueColumn+i;</span></div>
<div class="a code" style="left:526.0px;top:355px"><span style="color:#cccccc">columndestiny = </span><span style="color:#9cdcfe">UtilChess</span><span style="color:#cccccc">.</span><span style="color:#dcdcaa">calculateHorizontal</span><span style="color:#179fff">(</span><span style="color:#9cdcfe">column</span><span style="color:#179fff">)</span><span style="color:#cccccc">;</span></div>
<div class="a code" style="left:526.0px;top:374px"><span style="color:#cccccc">to = columndestiny + rowdestiny;</span></div>
<div class="a code" style="left:526.0px;top:393px"><span style="color:#4ec9b0">Movement</span><span style="color:#9cdcfe"> move2</span><span style="color:#cccccc"> = </span><span style="color:#c586c0">new</span><span style="color:#cccccc"> </span><span style="color:#dcdcaa">Movement</span><span style="color:#179fff">(</span><span style="color:#569cd6">this</span><span style="color:#cccccc">,from,to</span><span style="color:#179fff">)</span><span style="color:#cccccc">;</span></div>
<div class="a code" style="left:526.0px;top:412px"><span style="color:#9cdcfe">possibleMoves</span><span style="color:#cccccc">.</span><span style="color:#dcdcaa">add</span><span style="color:#179fff">(</span><span style="color:#9cdcfe">move2</span><span style="color:#179fff">)</span><span style="color:#cccccc">;</span></div>
<div class="a code" style="left:495.2px;top:431px"><span style="color:#da70d6">}</span></div>
<div class="a code" style="left:495.2px;top:450px"><span style="color:#c586c0">else</span><span style="color:#cccccc"> </span><span style="color:#c586c0">if</span><span style="color:#cccccc"> </span><span style="color:#da70d6">(</span><span style="color:#cccccc">valueColumn-i &gt;= </span><span style="color:#b5cea8">0</span><span style="color:#da70d6">)</span><span style="color:#cccccc"> </span><span style="color:#da70d6">{</span></div>
<div class="a code" style="left:526.0px;top:469px"><span style="color:#4ec9b0">int</span><span style="color:#9cdcfe"> column</span><span style="color:#cccccc"> = valueColumn-i;</span></div>
<div class="a code" style="left:526.0px;top:488px"><span style="color:#cccccc">columndestiny = </span><span style="color:#9cdcfe">UtilChess</span><span style="color:#cccccc">.</span><span style="color:#dcdcaa">calculateHorizontal</span><span style="color:#179fff">(</span><span style="color:#9cdcfe">column</span><span style="color:#179fff">)</span><span style="color:#cccccc">;</span></div>
<div class="a code" style="left:526.0px;top:507px"><span style="color:#cccccc">to = columndestiny + rowdestiny;</span></div>
<div class="a code" style="left:526.0px;top:526px"><span style="color:#4ec9b0">Movement</span><span style="color:#9cdcfe"> move2</span><span style="color:#cccccc"> = </span><span style="color:#c586c0">new</span><span style="color:#cccccc"> </span><span style="color:#dcdcaa">Movement</span><span style="color:#179fff">(</span><span style="color:#569cd6">this</span><span style="color:#cccccc">,from,to</span><span style="color:#179fff">)</span><span style="color:#cccccc">;</span></div>
<div class="a code" style="left:526.0px;top:545px"><span style="color:#9cdcfe">possibleMoves</span><span style="color:#cccccc">.</span><span style="color:#dcdcaa">add</span><span style="color:#179fff">(</span><span style="color:#9cdcfe">move2</span><span style="color:#179fff">)</span><span style="color:#cccccc">;</span></div>
<div class="a code" style="left:495.2px;top:564px"><span style="color:#da70d6">}</span></div>
<div class="a code" style="left:464.4px;top:602px"><span style="color:#ffd700">}</span></div>
<div class="a code" style="left:433.6px;top:621px"><span style="color:#179fff">}</span></div>
<div class="a code" style="left:433.6px;top:640px"><span style="color:#c586c0">return</span><span style="color:#cccccc"> possibleMoves;</span></div>
<div class="a code" style="left:402.8px;top:659px"><span style="color:#da70d6">}</span></div>
<div class="a code" style="left:402.8px;top:697px"><span style="color:#569cd6">public</span><span style="color:#cccccc"> </span><span style="color:#4ec9b0">boolean</span><span style="color:#cccccc"> </span><span style="color:#dcdcaa">isRealMove</span><span style="color:#da70d6">(</span><span style="color:#4ec9b0">Movement</span><span style="color:#cccccc"> </span><span style="color:#9cdcfe">movement</span><span style="color:#cccccc">, </span><span style="color:#4ec9b0">Board</span><span style="color:#cccccc"> </span><span style="color:#9cdcfe">board</span><span style="color:#cccccc">, </span><span style="color:#4ec9b0">String</span><span style="color:#cccccc"> </span><span style="color:#9cdcfe">turn</span><span style="color:#da70d6">)</span><span style="color:#cccccc"> </span><span style="color:#da70d6">{</span></div>
<div class="a code" style="left:433.6px;top:735px"><span style="color:#4ec9b0">List</span><span style="color:#cccccc">&lt;</span><span style="color:#4ec9b0">Square</span><span style="color:#cccccc">&gt; </span><span style="color:#9cdcfe">squares</span><span style="color:#cccccc"> = </span><span style="color:#dcdcaa">getSquares</span><span style="color:#179fff">(</span><span style="color:#9cdcfe">board</span><span style="color:#cccccc">, </span><span style="color:#9cdcfe">movement</span><span style="color:#179fff">)</span><span style="color:#cccccc">;</span></div>
<svg style="left:375.5px;top:411.5px" width="12" height="14" viewBox="0 0 12 14"><path d="M5 0.8a4.7 4.7 0 0 0-2.6 8.3c.5.4.8.9.8 1.5v2.9h3.8v-2.9c0-.6.3-1.1.8-1.5A4.7 4.7 0 0 0 5 0.8z" fill="#ffcc00"/><rect x="4.3" y="10.6" width="1.5" height="1.5" fill="#3a3000"/></svg>
<svg style="left:1794px;top:88px;overflow:hidden" width="112" height="330"><rect x="0" y="146" width="112" height="2" fill="#4a4a4a"/><rect x="20" y="132" width="24" height="2" fill="#264f78"/><rect x="0" y="0" width="7" height="1.6" fill="#569cd6" opacity=".42"/><rect x="8" y="0" width="3" height="1.6" fill="#9cdcfe" opacity=".42"/><rect x="11" y="0" width="1" height="1.6" fill="#cccccc" opacity=".42"/><rect x="12" y="0" width="5" height="1.6" fill="#9cdcfe" opacity=".42"/><rect x="17" y="0" width="1" height="1.6" fill="#cccccc" opacity=".42"/><rect x="18" y="0" width="4" height="1.6" fill="#9cdcfe" opacity=".42"/><rect x="22" y="0" width="1" height="1.6" fill="#cccccc" opacity=".42"/><rect x="0" y="4" width="6" height="1.6" fill="#569cd6" opacity=".42"/><rect x="7" y="4" width="4" height="1.6" fill="#9cdcfe" opacity=".42"/><rect x="11" y="4" width="1" height="1.6" fill="#cccccc" opacity=".42"/><rect x="12" y="4" width="4" height="1.6" fill="#9cdcfe" opacity=".42"/><rect x="16" y="4" width="1" height="1.6" fill="#cccccc" opacity=".42"/><rect x="17" y="4" width="9" height="1.6" fill="#4ec9b0" opacity=".42"/><rect x="26" y="4" width="1" height="1.6" fill="#cccccc" opacity=".42"/><rect x="0" y="6" width="6" height="1.6" fill="#569cd6" opacity=".42"/><rect x="7" y="6" width="4" height="1.6" fill="#9cdcfe" opacity=".42"/><rect x="11" y="6" width="1" height="1.6" fill="#cccccc" opacity=".42"/><rect x="12" y="6" width="4" height="1.6" fill="#9cdcfe" opacity=".42"/><rect x="16" y="6" width="1" height="1.6" fill="#cccccc" opacity=".42"/><rect x="17" y="6" width="4" height="1.6" fill="#4ec9b0" opacity=".42"/><rect x="21" y="6" width="1" height="1.6" fill="#cccccc" opacity=".42"/><rect x="0" y="8" width="6" height="1.6" fill="#569cd6" opacity=".42"/><rect x="7" y="8" width="4" height="1.6" fill="#9cdcfe" opacity=".42"/><rect x="11" y="8" width="1" height="1.6" fill="#cccccc" opacity=".42"/><rect x="12" y="8" width="4" height="1.6" fill="#9cdcfe" opacity=".42"/><rect x="16" y="8" width="1" height="1.6" fill="#cccccc" opacity=".42"/><rect x="17" y="8" width="7" height="1.6" fill="#4ec9b0" opacity=".42"/><rect x="24" y="8" width="1" height="1.6" fill="#cccccc" opacity=".42"/><rect x="0" y="12" width="3" height="1.6" fill="#6a9955" opacity=".42"/><rect x="1" y="14" width="27" height="1.6" fill="#6a9955" opacity=".42"/><rect x="1" y="16" width="15" height="1.6" fill="#6a9955" opacity=".42"/><rect x="1" y="18" width="2" height="1.6" fill="#6a9955" opacity=".42"/><rect x="0" y="22" width="6" height="1.6" fill="#569cd6" opacity=".42"/><rect x="7" y="22" width="5" height="1.6" fill="#569cd6" opacity=".42"/><rect x="13" y="22" width="6" height="1.6" fill="#4ec9b0" opacity=".42"/><rect x="20" y="22" width="7" height="1.6" fill="#569cd6" opacity=".42"/><rect x="28" y="22" width="5" height="1.6" fill="#4ec9b0" opacity=".42"/><rect x="34" y="22" width="1" height="1.6" fill="#cccccc" opacity=".42"/><rect x="4" y="26" width="6" height="1.6" fill="#569cd6" opacity=".42"/><rect x="11" y="26" width="6" height="1.6" fill="#dcdcaa" opacity=".42"/><rect x="17" y="26" width="2" height="1.6" fill="#cccccc" opacity=".42"/><rect x="20" y="26" width="1" height="1.6" fill="#cccccc" opacity=".42"/><rect x="8" y="28" width="5" height="1.6" fill="#569cd6" opacity=".42"/><rect x="13" y="28" width="2" height="1.6" fill="#cccccc" opacity=".42"/><rect x="15" y="28" width="6" height="1.6" fill="#9cdcfe" opacity=".42"/><rect x="21" y="28" width="3" height="1.6" fill="#ce9178" opacity=".42"/><rect x="8" y="30" width="5" height="1.6" fill="#569cd6" opacity=".42"/><rect x="13" y="30" width="1" height="1.6" fill="#cccccc" opacity=".42"/><rect x="14" y="30" width="8" height="1.6" fill="#dcdcaa" opacity=".42"/><rect x="22" y="30" width="1" height="1.6" fill="#cccccc" opacity=".42"/><rect x="23" y="30" width="1" height="1.6" fill="#b5cea8" opacity=".42"/><rect x="24" y="30" width="2" height="1.6" fill="#cccccc" opacity=".42"/><rect x="4" y="32" width="1" height="1.6" fill="#cccccc" opacity=".42"/><rect x="4" y="36" width="3" height="1.6" fill="#6a9955" opacity=".42"/><rect x="5" y="38" width="16" height="1.6" fill="#6a9955" opacity=".42"/><rect x="5" y="40" width="13" height="1.6" fill="#6a9955" opacity=".42"/><rect x="5" y="42" width="9" height="1.6" fill="#6a9955" opacity=".42"/><rect x="5" y="44" width="2" height="1.6" fill="#6a9955" opacity=".42"/><rect x="4" y="46" width="9" height="1.6" fill="#569cd6" opacity=".42"/><rect x="4" y="48" width="6" height="1.6" fill="#569cd6" opacity=".42"/><rect x="11" y="48" width="4" height="1.6" fill="#4ec9b0" opacity=".42"/><rect x="15" y="48" width="1" height="1.6" fill="#cccccc" opacity=".42"/><rect x="16" y="48" width="8" height="1.6" fill="#4ec9b0" opacity=".42"/><rect x="24" y="48" width="1" height="1.6" fill="#cccccc" opacity=".42"/><rect x="26" y="48" width="12" height="1.6" fill="#dcdcaa" opacity=".42"/><rect x="38" y="48" width="1" height="1.6" fill="#cccccc" opacity=".42"/><rect x="39" y="48" width="6" height="1.6" fill="#4ec9b0" opacity=".42"/><rect x="46" y="48" width="4" height="1.6" fill="#9cdcfe" opacity=".42"/><rect x="50" y="48" width="1" height="1.6" fill="#cccccc" opacity=".42"/><rect x="52" y="48" width="6" height="1.6" fill="#4ec9b0" opacity=".42"/><rect x="59" y="48" width="4" height="1.6" fill="#9cdcfe" opacity=".42"/><rect x="63" y="48" width="1" height="1.6" fill="#cccccc" opacity=".42"/><rect x="65" y="48" width="6" height="1.6" fill="#4ec9b0" opacity=".42"/><rect x="72" y="48" width="4" height="1.6" fill="#9cdcfe" opacity=".42"/><rect x="76" y="48" width="1" height="1.6" fill="#cccccc" opacity=".42"/><rect x="78" y="48" width="1" height="1.6" fill="#cccccc" opacity=".42"/><rect x="8" y="52" width="3" height="1.6" fill="#4ec9b0" opacity=".42"/><rect x="12" y="52" width="8" height="1.6" fill="#9cdcfe" opacity=".42"/><rect x="21" y="52" width="1" height="1.6" fill="#cccccc" opacity=".42"/><rect x="23" y="52" width="1" height="1.6" fill="#b5cea8" opacity=".42"/><rect x="25" y="52" width="1" height="1.6" fill="#cccccc" opacity=".42"/><rect x="27" y="52" width="7" height="1.6" fill="#4ec9b0" opacity=".42"/><rect x="34" y="52" width="1" height="1.6" fill="#cccccc" opacity=".42"/><rect x="35" y="52" width="8" height="1.6" fill="#dcdcaa" opacity=".42"/><rect x="43" y="52" width="1" height="1.6" fill="#cccccc" opacity=".42"/><rect x="44" y="52" width="4" height="1.6" fill="#9cdcfe" opacity=".42"/><rect x="48" y="52" width="1" height="1.6" fill="#cccccc" opacity=".42"/><rect x="49" y="52" width="9" height="1.6" fill="#dcdcaa" opacity=".42"/><rect x="58" y="52" width="1" height="1.6" fill="#cccccc" opacity=".42"/><rect x="59" y="52" width="1" height="1.6" fill="#b5cea8" opacity=".42"/><rect x="60" y="52" width="1" height="1.6" fill="#cccccc" opacity=".42"/><rect x="62" y="52" width="1" height="1.6" fill="#b5cea8" opacity=".42"/><rect x="63" y="52" width="2" height="1.6" fill="#cccccc" opacity=".42"/><rect x="66" y="52" width="1" height="1.6" fill="#cccccc" opacity=".42"/><rect x="68" y="52" width="3" height="1.6" fill="#ce9178" opacity=".42"/><rect x="72" y="52" width="1" height="1.6" fill="#cccccc" opacity=".42"/><rect x="74" y="52" width="4" height="1.6" fill="#9cdcfe" opacity=".42"/><rect x="78" y="52" width="1" height="1.6" fill="#cccccc" opacity=".42"/><rect x="8" y="54" width="4" height="1.6" fill="#4ec9b0" opacity=".42"/><rect x="12" y="54" width="1" height="1.6" fill="#cccccc" opacity=".42"/><rect x="13" y="54" width="8" height="1.6" fill="#4ec9b0" opacity=".42"/><rect x="21" y="54" width="1" height="1.6" fill="#cccccc" opacity=".42"/><rect x="23" y="54" width="13" height="1.6" fill="#9cdcfe" opacity=".42"/><rect x="37" y="54" width="1" height="1.6" fill="#cccccc" opacity=".42"/><rect x="39" y="54" width="3" height="1.6" fill="#c586c0" opacity=".42"/><rect x="43" y="54" width="9" height="1.6" fill="#4ec9b0" opacity=".42"/><rect x="52" y="54" width="1" height="1.6" fill="#cccccc" opacity=".42"/><rect x="53" y="54" width="8" height="1.6" fill="#4ec9b0" opacity=".42"/><rect x="61" y="54" width="4" height="1.6" fill="#cccccc" opacity=".42"/><rect x="8" y="58" width="6" height="1.6" fill="#4ec9b0" opacity=".42"/><rect x="15" y="58" width="2" height="1.6" fill="#9cdcfe" opacity=".42"/><rect x="17" y="58" width="1" height="1.6" fill="#cccccc" opacity=".42"/><rect x="8" y="62" width="6" height="1.6" fill="#4ec9b0" opacity=".42"/><rect x="15" y="62" width="10" height="1.6" fill="#9cdcfe" opacity=".42"/><rect x="26" y="62" width="1" height="1.6" fill="#cccccc" opacity=".42"/><rect x="28" y="62" width="2" height="1.6" fill="#ce9178" opacity=".42"/><rect x="30" y="62" width="1" height="1.6" fill="#cccccc" opacity=".42"/><rect x="8" y="64" width="6" height="1.6" fill="#4ec9b0" opacity=".42"/><rect x="15" y="64" width="13" height="1.6" fill="#9cdcfe" opacity=".42"/><rect x="29" y="64" width="1" height="1.6" fill="#cccccc" opacity=".42"/><rect x="31" y="64" width="2" height="1.6" fill="#ce9178" opacity=".42"/><rect x="33" y="64" width="1" height="1.6" fill="#cccccc" opacity=".42"/><rect x="8" y="68" width="3" height="1.6" fill="#4ec9b0" opacity=".42"/><rect x="12" y="68" width="11" height="1.6" fill="#9cdcfe" opacity=".42"/><rect x="24" y="68" width="1" height="1.6" fill="#cccccc" opacity=".42"/><rect x="26" y="68" width="9" height="1.6" fill="#4ec9b0" opacity=".42"/><rect x="35" y="68" width="1" height="1.6" fill="#cccccc" opacity=".42"/><rect x="36" y="68" width="14" height="1.6" fill="#dcdcaa" opacity=".42"/><rect x="50" y="68" width="1" height="1.6" fill="#cccccc" opacity=".42"/><rect x="51" y="68" width="4" height="1.6" fill="#9cdcfe" opacity=".42"/><rect x="55" y="68" width="2" height="1.6" fill="#cccccc" opacity=".42"/><rect x="8" y="70" width="3" height="1.6" fill="#4ec9b0" opacity=".42"/><rect x="12" y="70" width="8" height="1.6" fill="#9cdcfe" opacity=".42"/><rect x="21" y="70" width="1" height="1.6" fill="#cccccc" opacity=".42"/><rect x="23" y="70" width="9" height="1.6" fill="#4ec9b0" opacity=".42"/><rect x="32" y="70" width="1" height="1.6" fill="#cccccc" opacity=".42"/><rect x="33" y="70" width="11" height="1.6" fill="#dcdcaa" opacity=".42"/><rect x="44" y="70" width="1" height="1.6" fill="#cccccc" opacity=".42"/><rect x="45" y="70" width="4" height="1.6" fill="#9cdcfe" opacity=".42"/><rect x="49" y="70" width="2" height="1.6" fill="#cccccc" opacity=".42"/><rect x="8" y="74" width="3" height="1.6" fill="#c586c0" opacity=".42"/><rect x="12" y="74" width="1" height="1.6" fill="#cccccc" opacity=".42"/><rect x="13" y="74" width="3" height="1.6" fill="#4ec9b0" opacity=".42"/><rect x="17" y="74" width="1" height="1.6" fill="#9cdcfe" opacity=".42"/><rect x="19" y="74" width="1" height="1.6" fill="#cccccc" opacity=".42"/><rect x="21" y="74" width="1" height="1.6" fill="#b5cea8" opacity=".42"/><rect x="22" y="74" width="1" height="1.6" fill="#cccccc" opacity=".42"/><rect x="24" y="74" width="1" height="1.6" fill="#9cdcfe" opacity=".42"/><rect x="26" y="74" width="1" height="1.6" fill="#cccccc" opacity=".42"/><rect x="28" y="74" width="1" height="1.6" fill="#b5cea8" opacity=".42"/><rect x="29" y="74" width="1" height="1.6" fill="#cccccc" opacity=".42"/><rect x="31" y="74" width="1" height="1.6" fill="#9cdcfe" opacity=".42"/><rect x="32" y="74" width="3" height="1.6" fill="#cccccc" opacity=".42"/><rect x="36" y="74" width="1" height="1.6" fill="#cccccc" opacity=".42"/><rect x="12" y="76" width="2" height="1.6" fill="#c586c0" opacity=".42"/><rect x="15" y="76" width="1" height="1.6" fill="#cccccc" opacity=".42"/><rect x="16" y="76" width="8" height="1.6" fill="#9cdcfe" opacity=".42"/><rect x="24" y="76" width="1" height="1.6" fill="#cccccc" opacity=".42"/><rect x="25" y="76" width="1" height="1.6" fill="#9cdcfe" opacity=".42"/><rect x="27" y="76" width="1" height="1.6" fill="#cccccc" opacity=".42"/><rect x="29" y="76" width="1" height="1.6" fill="#b5cea8" opacity=".42"/><rect x="30" y="76" width="1" height="1.6" fill="#cccccc" opacity=".42"/><rect x="32" y="76" width="1" height="1.6" fill="#cccccc" opacity=".42"/><rect x="16" y="78" width="3" height="1.6" fill="#4ec9b0" opacity=".42"/><rect x="20" y="78" width="3" height="1.6" fill="#9cdcfe" opacity=".42"/><rect x="24" y="78" width="1" height="1.6" fill="#cccccc" opacity=".42"/><rect x="26" y="78" width="8" height="1.6" fill="#9cdcfe" opacity=".42"/><rect x="34" y="78" width="1" height="1.6" fill="#cccccc" opacity=".42"/><rect x="35" y="78" width="1" height="1.6" fill="#9cdcfe" opacity=".42"/><rect x="36" y="78" width="1" height="1.6" fill="#cccccc" opacity=".42"/><rect x="16" y="80" width="10" height="1.6" fill="#9cdcfe" opacity=".42"/><rect x="27" y="80" width="1" height="1.6" fill="#cccccc" opacity=".42"/><rect x="29" y="80" width="9" height="1.6" fill="#4ec9b0" opacity=".42"/><rect x="38" y="80" width="1" height="1.6" fill="#cccccc" opacity=".42"/><rect x="39" y="80" width="17" height="1.6" fill="#dcdcaa" opacity=".42"/><rect x="56" y="80" width="1" height="1.6" fill="#cccccc" opacity=".42"/><rect x="57" y="80" width="3" height="1.6" fill="#9cdcfe" opacity=".42"/><rect x="60" y="80" width="2" height="1.6" fill="#cccccc" opacity=".42"/><rect x="16" y="82" width="2" height="1.6" fill="#c586c0" opacity=".42"/><rect x="19" y="82" width="1" height="1.6" fill="#cccccc" opacity=".42"/><rect x="20" y="82" width="11" height="1.6" fill="#9cdcfe" opacity=".42"/><rect x="31" y="82" width="1" height="1.6" fill="#cccccc" opacity=".42"/><rect x="32" y="82" width="1" height="1.6" fill="#9cdcfe" opacity=".42"/><rect x="34" y="82" width="1" height="1.6" fill="#cccccc" opacity=".42"/><rect x="36" y="82" width="1" height="1.6" fill="#b5cea8" opacity=".42"/><rect x="37" y="82" width="1" height="1.6" fill="#cccccc" opacity=".42"/><rect x="39" y="82" width="1" height="1.6" fill="#cccccc" opacity=".42"/><rect x="20" y="84" width="3" height="1.6" fill="#4ec9b0" opacity=".42"/><rect x="24" y="84" width="6" height="1.6" fill="#9cdcfe" opacity=".42"/><rect x="31" y="84" width="1" height="1.6" fill="#cccccc" opacity=".42"/><rect x="33" y="84" width="11" height="1.6" fill="#9cdcfe" opacity=".42"/><rect x="44" y="84" width="1" height="1.6" fill="#cccccc" opacity=".42"/><rect x="45" y="84" width="1" height="1.6" fill="#9cdcfe" opacity=".42"/><rect x="46" y="84" width="1" height="1.6" fill="#cccccc" opacity=".42"/><rect x="20" y="86" width="13" height="1.6" fill="#9cdcfe" opacity=".42"/><rect x="34" y="86" width="1" height="1.6" fill="#cccccc" opacity=".42"/><rect x="36" y="86" width="9" height="1.6" fill="#4ec9b0" opacity=".42"/><rect x="45" y="86" width="1" height="1.6" fill="#cccccc" opacity=".42"/><rect x="46" y="86" width="19" height="1.6" fill="#dcdcaa" opacity=".42"/><rect x="65" y="86" width="1" height="1.6" fill="#cccccc" opacity=".42"/><rect x="66" y="86" width="6" height="1.6" fill="#9cdcfe" opacity=".42"/><rect x="72" y="86" width="2" height="1.6" fill="#cccccc" opacity=".42"/><rect x="20" y="88" width="2" height="1.6" fill="#9cdcfe" opacity=".42"/><rect x="23" y="88" width="1" height="1.6" fill="#cccccc" opacity=".42"/><rect x="25" y="88" width="13" height="1.6" fill="#9cdcfe" opacity=".42"/><rect x="39" y="88" width="1" height="1.6" fill="#cccccc" opacity=".42"/><rect x="41" y="88" width="10" height="1.6" fill="#9cdcfe" opacity=".42"/><rect x="51" y="88" width="1" height="1.6" fill="#cccccc" opacity=".42"/><rect x="20" y="90" width="8" height="1.6" fill="#4ec9b0" opacity=".42"/><rect x="29" y="90" width="5" height="1.6" fill="#9cdcfe" opacity=".42"/><rect x="35" y="90" width="1" height="1.6" fill="#cccccc" opacity=".42"/><rect x="37" y="90" width="3" height="1.6" fill="#c586c0" opacity=".42"/><rect x="41" y="90" width="8" height="1.6" fill="#4ec9b0" opacity=".42"/><rect x="49" y="90" width="1" height="1.6" fill="#cccccc" opacity=".42"/><rect x="50" y="90" width="4" height="1.6" fill="#569cd6" opacity=".42"/><rect x="54" y="90" width="1" height="1.6" fill="#cccccc" opacity=".42"/><rect x="55" y="90" width="4" height="1.6" fill="#9cdcfe" opacity=".42"/><rect x="59" y="90" width="1" height="1.6" fill="#cccccc" opacity=".42"/><rect x="60" y="90" width="2" height="1.6" fill="#9cdcfe" opacity=".42"/><rect x="62" y="90" width="2" height="1.6" fill="#cccccc" opacity=".42"/><rect x="20" y="92" width="13" height="1.6" fill="#9cdcfe" opacity=".42"/><rect x="33" y="92" width="1" height="1.6" fill="#cccccc" opacity=".42"/><rect x="34" y="92" width="3" height="1.6" fill="#dcdcaa" opacity=".42"/><rect x="37" y="92" width="1" height="1.6" fill="#cccccc" opacity=".42"/><rect x="38" y="92" width="5" height="1.6" fill="#9cdcfe" opacity=".42"/><rect x="43" y="92" width="2" height="1.6" fill="#cccccc" opacity=".42"/><rect x="16" y="94" width="1" height="1.6" fill="#cccccc" opacity=".42"/><rect x="16" y="96" width="4" height="1.6" fill="#c586c0" opacity=".42"/><rect x="21" y="96" width="2" height="1.6" fill="#c586c0" opacity=".42"/><rect x="24" y="96" width="1" height="1.6" fill="#cccccc" opacity=".42"/><rect x="25" y="96" width="11" height="1.6" fill="#9cdcfe" opacity=".42"/><rect x="36" y="96" width="1" height="1.6" fill="#cccccc" opacity=".42"/><rect x="37" y="96" width="1" height="1.6" fill="#9cdcfe" opacity=".42"/><rect x="39" y="96" width="2" height="1.6" fill="#cccccc" opacity=".42"/><rect x="42" y="96" width="1" height="1.6" fill="#b5cea8" opacity=".42"/><rect x="43" y="96" width="1" height="1.6" fill="#cccccc" opacity=".42"/><rect x="45" y="96" width="1" height="1.6" fill="#cccccc" opacity=".42"/><rect x="20" y="98" width="3" height="1.6" fill="#4ec9b0" opacity=".42"/><rect x="24" y="98" width="6" height="1.6" fill="#9cdcfe" opacity=".42"/><rect x="31" y="98" width="1" height="1.6" fill="#cccccc" opacity=".42"/><rect x="33" y="98" width="11" height="1.6" fill="#9cdcfe" opacity=".42"/><rect x="44" y="98" width="1" height="1.6" fill="#cccccc" opacity=".42"/><rect x="45" y="98" width="1" height="1.6" fill="#9cdcfe" opacity=".42"/><rect x="46" y="98" width="1" height="1.6" fill="#cccccc" opacity=".42"/><rect x="20" y="100" width="13" height="1.6" fill="#9cdcfe" opacity=".42"/><rect x="34" y="100" width="1" height="1.6" fill="#cccccc" opacity=".42"/><rect x="36" y="100" width="9" height="1.6" fill="#4ec9b0" opacity=".42"/><rect x="45" y="100" width="1" height="1.6" fill="#cccccc" opacity=".42"/><rect x="46" y="100" width="19" height="1.6" fill="#dcdcaa" opacity=".42"/><rect x="65" y="100" width="1" height="1.6" fill="#cccccc" opacity=".42"/><rect x="66" y="100" width="6" height="1.6" fill="#9cdcfe" opacity=".42"/><rect x="72" y="100" width="2" height="1.6" fill="#cccccc" opacity=".42"/><rect x="20" y="102" width="2" height="1.6" fill="#9cdcfe" opacity=".42"/><rect x="23" y="102" width="1" height="1.6" fill="#cccccc" opacity=".42"/><rect x="25" y="102" width="13" height="1.6" fill="#9cdcfe" opacity=".42"/><rect x="39" y="102" width="1" height="1.6" fill="#cccccc" opacity=".42"/><rect x="41" y="102" width="10" height="1.6" fill="#9cdcfe" opacity=".42"/><rect x="51" y="102" width="1" height="1.6" fill="#cccccc" opacity=".42"/><rect x="20" y="104" width="8" height="1.6" fill="#4ec9b0" opacity=".42"/><rect x="29" y="104" width="5" height="1.6" fill="#9cdcfe" opacity=".42"/><rect x="35" y="104" width="1" height="1.6" fill="#cccccc" opacity=".42"/><rect x="37" y="104" width="3" height="1.6" fill="#c586c0" opacity=".42"/><rect x="41" y="104" width="8" height="1.6" fill="#4ec9b0" opacity=".42"/><rect x="49" y="104" width="1" height="1.6" fill="#cccccc" opacity=".42"/><rect x="50" y="104" width="4" height="1.6" fill="#569cd6" opacity=".42"/><rect x="54" y="104" width="1" height="1.6" fill="#cccccc" opacity=".42"/><rect x="55" y="104" width="4" height="1.6" fill="#9cdcfe" opacity=".42"/><rect x="59" y="104" width="1" height="1.6" fill="#cccccc" opacity=".42"/><rect x="60" y="104" width="2" height="1.6" fill="#9cdcfe" opacity=".42"/><rect x="62" y="104" width="2" height="1.6" fill="#cccccc" opacity=".42"/><rect x="20" y="106" width="13" height="1.6" fill="#9cdcfe" opacity=".42"/><rect x="33" y="106" width="1" height="1.6" fill="#cccccc" opacity=".42"/><rect x="34" y="106" width="3" height="1.6" fill="#dcdcaa" opacity=".42"/><rect x="37" y="106" width="1" height="1.6" fill="#cccccc" opacity=".42"/><rect x="38" y="106" width="5" height="1.6" fill="#9cdcfe" opacity=".42"/><rect x="43" y="106" width="2" height="1.6" fill="#cccccc" opacity=".42"/><rect x="16" y="108" width="1" height="1.6" fill="#cccccc" opacity=".42"/><rect x="12" y="112" width="1" height="1.6" fill="#cccccc" opacity=".42"/><rect x="12" y="116" width="2" height="1.6" fill="#c586c0" opacity=".42"/><rect x="15" y="116" width="1" height="1.6" fill="#cccccc" opacity=".42"/><rect x="16" y="116" width="8" height="1.6" fill="#9cdcfe" opacity=".42"/><rect x="24" y="116" width="1" height="1.6" fill="#cccccc" opacity=".42"/><rect x="25" y="116" width="1" height="1.6" fill="#9cdcfe" opacity=".42"/><rect x="27" y="116" width="2" height="1.6" fill="#cccccc" opacity=".42"/><rect x="29" y="116" width="1" height="1.6" fill="#b5cea8" opacity=".42"/><rect x="30" y="116" width="1" height="1.6" fill="#cccccc" opacity=".42"/><rect x="32" y="116" width="1" height="1.6" fill="#cccccc" opacity=".42"/><rect x="16" y="118" width="3" height="1.6" fill="#4ec9b0" opacity=".42"/><rect x="20" y="118" width="3" height="1.6" fill="#9cdcfe" opacity=".42"/><rect x="24" y="118" width="1" height="1.6" fill="#cccccc" opacity=".42"/><rect x="26" y="118" width="8" height="1.6" fill="#9cdcfe" opacity=".42"/><rect x="34" y="118" width="1" height="1.6" fill="#cccccc" opacity=".42"/><rect x="35" y="118" width="1" height="1.6" fill="#9cdcfe" opacity=".42"/><rect x="36" y="118" width="1" height="1.6" fill="#cccccc" opacity=".42"/><rect x="16" y="120" width="10" height="1.6" fill="#9cdcfe" opacity=".42"/><rect x="27" y="120" width="1" height="1.6" fill="#cccccc" opacity=".42"/><rect x="29" y="120" width="9" height="1.6" fill="#4ec9b0" opacity=".42"/><rect x="38" y="120" width="1" height="1.6" fill="#cccccc" opacity=".42"/><rect x="39" y="120" width="17" height="1.6" fill="#dcdcaa" opacity=".42"/><rect x="56" y="120" width="1" height="1.6" fill="#cccccc" opacity=".42"/><rect x="57" y="120" width="3" height="1.6" fill="#9cdcfe" opacity=".42"/><rect x="60" y="120" width="2" height="1.6" fill="#cccccc" opacity=".42"/><rect x="16" y="122" width="2" height="1.6" fill="#c586c0" opacity=".42"/><rect x="19" y="122" width="1" height="1.6" fill="#cccccc" opacity=".42"/><rect x="20" y="122" width="11" height="1.6" fill="#9cdcfe" opacity=".42"/><rect x="31" y="122" width="1" height="1.6" fill="#cccccc" opacity=".42"/><rect x="32" y="122" width="1" height="1.6" fill="#9cdcfe" opacity=".42"/><rect x="34" y="122" width="1" height="1.6" fill="#cccccc" opacity=".42"/><rect x="36" y="122" width="1" height="1.6" fill="#b5cea8" opacity=".42"/><rect x="37" y="122" width="1" height="1.6" fill="#cccccc" opacity=".42"/><rect x="39" y="122" width="1" height="1.6" fill="#cccccc" opacity=".42"/><rect x="20" y="124" width="3" height="1.6" fill="#4ec9b0" opacity=".42"/><rect x="24" y="124" width="6" height="1.6" fill="#9cdcfe" opacity=".42"/><rect x="31" y="124" width="1" height="1.6" fill="#cccccc" opacity=".42"/><rect x="33" y="124" width="11" height="1.6" fill="#9cdcfe" opacity=".42"/><rect x="44" y="124" width="1" height="1.6" fill="#cccccc" opacity=".42"/><rect x="45" y="124" width="1" height="1.6" fill="#9cdcfe" opacity=".42"/><rect x="46" y="124" width="1" height="1.6" fill="#cccccc" opacity=".42"/><rect x="20" y="126" width="13" height="1.6" fill="#9cdcfe" opacity=".42"/><rect x="34" y="126" width="1" height="1.6" fill="#cccccc" opacity=".42"/><rect x="36" y="126" width="9" height="1.6" fill="#4ec9b0" opacity=".42"/><rect x="45" y="126" width="1" height="1.6" fill="#cccccc" opacity=".42"/><rect x="46" y="126" width="19" height="1.6" fill="#dcdcaa" opacity=".42"/><rect x="65" y="126" width="1" height="1.6" fill="#cccccc" opacity=".42"/><rect x="66" y="126" width="6" height="1.6" fill="#9cdcfe" opacity=".42"/><rect x="72" y="126" width="2" height="1.6" fill="#cccccc" opacity=".42"/><rect x="20" y="128" width="2" height="1.6" fill="#9cdcfe" opacity=".42"/><rect x="23" y="128" width="1" height="1.6" fill="#cccccc" opacity=".42"/><rect x="25" y="128" width="13" height="1.6" fill="#9cdcfe" opacity=".42"/><rect x="39" y="128" width="1" height="1.6" fill="#cccccc" opacity=".42"/><rect x="41" y="128" width="10" height="1.6" fill="#9cdcfe" opacity=".42"/><rect x="51" y="128" width="1" height="1.6" fill="#cccccc" opacity=".42"/><rect x="20" y="130" width="8" height="1.6" fill="#4ec9b0" opacity=".42"/><rect x="29" y="130" width="5" height="1.6" fill="#9cdcfe" opacity=".42"/><rect x="35" y="130" width="1" height="1.6" fill="#cccccc" opacity=".42"/><rect x="37" y="130" width="3" height="1.6" fill="#c586c0" opacity=".42"/><rect x="41" y="130" width="8" height="1.6" fill="#4ec9b0" opacity=".42"/><rect x="49" y="130" width="1" height="1.6" fill="#cccccc" opacity=".42"/><rect x="50" y="130" width="4" height="1.6" fill="#569cd6" opacity=".42"/><rect x="54" y="130" width="1" height="1.6" fill="#cccccc" opacity=".42"/><rect x="55" y="130" width="4" height="1.6" fill="#9cdcfe" opacity=".42"/><rect x="59" y="130" width="1" height="1.6" fill="#cccccc" opacity=".42"/><rect x="60" y="130" width="2" height="1.6" fill="#9cdcfe" opacity=".42"/><rect x="62" y="130" width="2" height="1.6" fill="#cccccc" opacity=".42"/><rect x="20" y="132" width="13" height="1.6" fill="#9cdcfe" opacity=".42"/><rect x="33" y="132" width="1" height="1.6" fill="#cccccc" opacity=".42"/><rect x="34" y="132" width="3" height="1.6" fill="#dcdcaa" opacity=".42"/><rect x="37" y="132" width="1" height="1.6" fill="#cccccc" opacity=".42"/><rect x="38" y="132" width="5" height="1.6" fill="#9cdcfe" opacity=".42"/><rect x="43" y="132" width="2" height="1.6" fill="#cccccc" opacity=".42"/><rect x="16" y="134" width="1" height="1.6" fill="#cccccc" opacity=".42"/><rect x="16" y="136" width="4" height="1.6" fill="#c586c0" opacity=".42"/><rect x="21" y="136" width="2" height="1.6" fill="#c586c0" opacity=".42"/><rect x="24" y="136" width="1" height="1.6" fill="#cccccc" opacity=".42"/><rect x="25" y="136" width="11" height="1.6" fill="#9cdcfe" opacity=".42"/><rect x="36" y="136" width="1" height="1.6" fill="#cccccc" opacity=".42"/><rect x="37" y="136" width="1" height="1.6" fill="#9cdcfe" opacity=".42"/><rect x="39" y="136" width="2" height="1.6" fill="#cccccc" opacity=".42"/><rect x="42" y="136" width="1" height="1.6" fill="#b5cea8" opacity=".42"/><rect x="43" y="136" width="1" height="1.6" fill="#cccccc" opacity=".42"/><rect x="45" y="136" width="1" height="1.6" fill="#cccccc" opacity=".42"/><rect x="20" y="138" width="3" height="1.6" fill="#4ec9b0" opacity=".42"/><rect x="24" y="138" width="6" height="1.6" fill="#9cdcfe" opacity=".42"/><rect x="31" y="138" width="1" height="1.6" fill="#cccccc" opacity=".42"/><rect x="33" y="138" width="11" height="1.6" fill="#9cdcfe" opacity=".42"/><rect x="44" y="138" width="1" height="1.6" fill="#cccccc" opacity=".42"/><rect x="45" y="138" width="1" height="1.6" fill="#9cdcfe" opacity=".42"/><rect x="46" y="138" width="1" height="1.6" fill="#cccccc" opacity=".42"/><rect x="20" y="140" width="13" height="1.6" fill="#9cdcfe" opacity=".42"/><rect x="34" y="140" width="1" height="1.6" fill="#cccccc" opacity=".42"/><rect x="36" y="140" width="9" height="1.6" fill="#4ec9b0" opacity=".42"/><rect x="45" y="140" width="1" height="1.6" fill="#cccccc" opacity=".42"/><rect x="46" y="140" width="19" height="1.6" fill="#dcdcaa" opacity=".42"/><rect x="65" y="140" width="1" height="1.6" fill="#cccccc" opacity=".42"/><rect x="66" y="140" width="6" height="1.6" fill="#9cdcfe" opacity=".42"/><rect x="72" y="140" width="2" height="1.6" fill="#cccccc" opacity=".42"/><rect x="20" y="142" width="2" height="1.6" fill="#9cdcfe" opacity=".42"/><rect x="23" y="142" width="1" height="1.6" fill="#cccccc" opacity=".42"/><rect x="25" y="142" width="13" height="1.6" fill="#9cdcfe" opacity=".42"/><rect x="39" y="142" width="1" height="1.6" fill="#cccccc" opacity=".42"/><rect x="41" y="142" width="10" height="1.6" fill="#9cdcfe" opacity=".42"/><rect x="51" y="142" width="1" height="1.6" fill="#cccccc" opacity=".42"/><rect x="20" y="144" width="8" height="1.6" fill="#4ec9b0" opacity=".42"/><rect x="29" y="144" width="5" height="1.6" fill="#9cdcfe" opacity=".42"/><rect x="35" y="144" width="1" height="1.6" fill="#cccccc" opacity=".42"/><rect x="37" y="144" width="3" height="1.6" fill="#c586c0" opacity=".42"/><rect x="41" y="144" width="8" height="1.6" fill="#4ec9b0" opacity=".42"/><rect x="49" y="144" width="1" height="1.6" fill="#cccccc" opacity=".42"/><rect x="50" y="144" width="4" height="1.6" fill="#569cd6" opacity=".42"/><rect x="54" y="144" width="1" height="1.6" fill="#cccccc" opacity=".42"/><rect x="55" y="144" width="4" height="1.6" fill="#9cdcfe" opacity=".42"/><rect x="59" y="144" width="1" height="1.6" fill="#cccccc" opacity=".42"/><rect x="60" y="144" width="2" height="1.6" fill="#9cdcfe" opacity=".42"/><rect x="62" y="144" width="2" height="1.6" fill="#cccccc" opacity=".42"/><rect x="20" y="146" width="13" height="1.6" fill="#9cdcfe" opacity=".42"/><rect x="33" y="146" width="1" height="1.6" fill="#cccccc" opacity=".42"/><rect x="34" y="146" width="3" height="1.6" fill="#dcdcaa" opacity=".42"/><rect x="37" y="146" width="1" height="1.6" fill="#cccccc" opacity=".42"/><rect x="38" y="146" width="5" height="1.6" fill="#9cdcfe" opacity=".42"/><rect x="43" y="146" width="2" height="1.6" fill="#cccccc" opacity=".42"/><rect x="16" y="148" width="1" height="1.6" fill="#cccccc" opacity=".42"/><rect x="12" y="152" width="1" height="1.6" fill="#cccccc" opacity=".42"/><rect x="8" y="154" width="1" height="1.6" fill="#cccccc" opacity=".42"/><rect x="8" y="156" width="6" height="1.6" fill="#c586c0" opacity=".42"/><rect x="15" y="156" width="13" height="1.6" fill="#9cdcfe" opacity=".42"/><rect x="28" y="156" width="1" height="1.6" fill="#cccccc" opacity=".42"/><rect x="4" y="158" width="1" height="1.6" fill="#cccccc" opacity=".42"/><rect x="4" y="162" width="6" height="1.6" fill="#569cd6" opacity=".42"/><rect x="11" y="162" width="7" height="1.6" fill="#4ec9b0" opacity=".42"/><rect x="19" y="162" width="10" height="1.6" fill="#dcdcaa" opacity=".42"/><rect x="29" y="162" width="1" height="1.6" fill="#cccccc" opacity=".42"/><rect x="30" y="162" width="8" height="1.6" fill="#4ec9b0" opacity=".42"/><rect x="39" y="162" width="8" height="1.6" fill="#9cdcfe" opacity=".42"/><rect x="47" y="162" width="1" height="1.6" fill="#cccccc" opacity=".42"/><rect x="49" y="162" width="5" height="1.6" fill="#4ec9b0" opacity=".42"/><rect x="55" y="162" width="5" height="1.6" fill="#9cdcfe" opacity=".42"/><rect x="60" y="162" width="1" height="1.6" fill="#cccccc" opacity=".42"/><rect x="62" y="162" width="6" height="1.6" fill="#4ec9b0" opacity=".42"/><rect x="69" y="162" width="4" height="1.6" fill="#9cdcfe" opacity=".42"/><rect x="73" y="162" width="1" height="1.6" fill="#cccccc" opacity=".42"/><rect x="75" y="162" width="1" height="1.6" fill="#cccccc" opacity=".42"/><rect x="8" y="166" width="4" height="1.6" fill="#4ec9b0" opacity=".42"/><rect x="12" y="166" width="1" height="1.6" fill="#cccccc" opacity=".42"/><rect x="13" y="166" width="6" height="1.6" fill="#4ec9b0" opacity=".42"/><rect x="19" y="166" width="1" height="1.6" fill="#cccccc" opacity=".42"/><rect x="21" y="166" width="7" height="1.6" fill="#9cdcfe" opacity=".42"/><rect x="29" y="166" width="1" height="1.6" fill="#cccccc" opacity=".42"/><rect x="31" y="166" width="10" height="1.6" fill="#dcdcaa" opacity=".42"/><rect x="41" y="166" width="1" height="1.6" fill="#cccccc" opacity=".42"/><rect x="42" y="166" width="5" height="1.6" fill="#9cdcfe" opacity=".42"/><rect x="47" y="166" width="1" height="1.6" fill="#cccccc" opacity=".42"/><rect x="49" y="166" width="8" height="1.6" fill="#9cdcfe" opacity=".42"/><rect x="57" y="166" width="2" height="1.6" fill="#cccccc" opacity=".42"/><rect x="8" y="168" width="6" height="1.6" fill="#4ec9b0" opacity=".42"/><rect x="15" y="168" width="13" height="1.6" fill="#9cdcfe" opacity=".42"/><rect x="29" y="168" width="1" height="1.6" fill="#cccccc" opacity=".42"/><rect x="31" y="168" width="5" height="1.6" fill="#9cdcfe" opacity=".42"/><rect x="36" y="168" width="1" height="1.6" fill="#cccccc" opacity=".42"/><rect x="37" y="168" width="9" height="1.6" fill="#dcdcaa" opacity=".42"/><rect x="46" y="168" width="1" height="1.6" fill="#cccccc" opacity=".42"/><rect x="47" y="168" width="8" height="1.6" fill="#9cdcfe" opacity=".42"/><rect x="55" y="168" width="1" height="1.6" fill="#cccccc" opacity=".42"/><rect x="56" y="168" width="5" height="1.6" fill="#dcdcaa" opacity=".42"/><rect x="61" y="168" width="4" height="1.6" fill="#cccccc" opacity=".42"/><rect x="8" y="170" width="3" height="1.6" fill="#c586c0" opacity=".42"/><rect x="12" y="170" width="1" height="1.6" fill="#cccccc" opacity=".42"/><rect x="13" y="170" width="6" height="1.6" fill="#4ec9b0" opacity=".42"/><rect x="20" y="170" width="1" height="1.6" fill="#9cdcfe" opacity=".42"/><rect x="22" y="170" width="1" height="1.6" fill="#cccccc" opacity=".42"/><rect x="24" y="170" width="7" height="1.6" fill="#9cdcfe" opacity=".42"/><rect x="31" y="170" width="1" height="1.6" fill="#cccccc" opacity=".42"/><rect x="33" y="170" width="1" height="1.6" fill="#cccccc" opacity=".42"/><rect x="12" y="172" width="2" height="1.6" fill="#c586c0" opacity=".42"/><rect x="15" y="172" width="1" height="1.6" fill="#cccccc" opacity=".42"/><rect x="16" y="172" width="1" height="1.6" fill="#9cdcfe" opacity=".42"/><rect x="17" y="172" width="1" height="1.6" fill="#cccccc" opacity=".42"/><rect x="18" y="172" width="8" height="1.6" fill="#dcdcaa" opacity=".42"/><rect x="26" y="172" width="2" height="1.6" fill="#cccccc" opacity=".42"/><rect x="29" y="172" width="2" height="1.6" fill="#cccccc" opacity=".42"/><rect x="32" y="172" width="4" height="1.6" fill="#569cd6" opacity=".42"/><rect x="36" y="172" width="1" height="1.6" fill="#cccccc" opacity=".42"/><rect x="38" y="172" width="1" height="1.6" fill="#cccccc" opacity=".42"/><rect x="16" y="174" width="6" height="1.6" fill="#c586c0" opacity=".42"/><rect x="23" y="174" width="5" height="1.6" fill="#569cd6" opacity=".42"/><rect x="28" y="174" width="1" height="1.6" fill="#cccccc" opacity=".42"/><rect x="12" y="176" width="1" height="1.6" fill="#cccccc" opacity=".42"/><rect x="12" y="178" width="4" height="1.6" fill="#c586c0" opacity=".42"/><rect x="17" y="178" width="1" height="1.6" fill="#cccccc" opacity=".42"/><rect x="16" y="180" width="2" height="1.6" fill="#c586c0" opacity=".42"/><rect x="19" y="180" width="1" height="1.6" fill="#cccccc" opacity=".42"/><rect x="20" y="180" width="13" height="1.6" fill="#9cdcfe" opacity=".42"/><rect x="33" y="180" width="1" height="1.6" fill="#cccccc" opacity=".42"/><rect x="34" y="180" width="8" height="1.6" fill="#dcdcaa" opacity=".42"/><rect x="42" y="180" width="2" height="1.6" fill="#cccccc" opacity=".42"/><rect x="45" y="180" width="2" height="1.6" fill="#cccccc" opacity=".42"/><rect x="48" y="180" width="4" height="1.6" fill="#569cd6" opacity=".42"/><rect x="52" y="180" width="1" height="1.6" fill="#cccccc" opacity=".42"/><rect x="54" y="180" width="1" height="1.6" fill="#cccccc" opacity=".42"/><rect x="20" y="182" width="6" height="1.6" fill="#c586c0" opacity=".42"/><rect x="27" y="182" width="5" height="1.6" fill="#569cd6" opacity=".42"/><rect x="32" y="182" width="1" height="1.6" fill="#cccccc" opacity=".42"/><rect x="16" y="184" width="1" height="1.6" fill="#cccccc" opacity=".42"/><rect x="16" y="186" width="4" height="1.6" fill="#c586c0" opacity=".42"/><rect x="21" y="186" width="1" height="1.6" fill="#cccccc" opacity=".42"/><rect x="23" y="186" width="26" height="1.6" fill="#6a9955" opacity=".42"/><rect x="20" y="188" width="2" height="1.6" fill="#c586c0" opacity=".42"/><rect x="23" y="188" width="2" height="1.6" fill="#cccccc" opacity=".42"/><rect x="25" y="188" width="13" height="1.6" fill="#9cdcfe" opacity=".42"/><rect x="38" y="188" width="1" height="1.6" fill="#cccccc" opacity=".42"/><rect x="39" y="188" width="8" height="1.6" fill="#dcdcaa" opacity=".42"/><rect x="47" y="188" width="3" height="1.6" fill="#cccccc" opacity=".42"/><rect x="50" y="188" width="8" height="1.6" fill="#dcdcaa" opacity=".42"/><rect x="58" y="188" width="3" height="1.6" fill="#cccccc" opacity=".42"/><rect x="61" y="188" width="6" height="1.6" fill="#dcdcaa" opacity=".42"/><rect x="67" y="188" width="1" height="1.6" fill="#cccccc" opacity=".42"/><rect x="68" y="188" width="5" height="1.6" fill="#9cdcfe" opacity=".42"/><rect x="73" y="188" width="1" height="1.6" fill="#cccccc" opacity=".42"/><rect x="74" y="188" width="9" height="1.6" fill="#dcdcaa" opacity=".42"/><rect x="83" y="188" width="1" height="1.6" fill="#cccccc" opacity=".42"/><rect x="84" y="188" width="8" height="1.6" fill="#9cdcfe" opacity=".42"/><rect x="92" y="188" width="1" height="1.6" fill="#cccccc" opacity=".42"/><rect x="93" y="188" width="7" height="1.6" fill="#dcdcaa" opacity=".42"/><rect x="100" y="188" width="4" height="1.6" fill="#cccccc" opacity=".42"/><rect x="104" y="188" width="8" height="1.6" fill="#dcdcaa" opacity=".42"/><rect x="112" y="188" width="3" height="1.6" fill="#cccccc" opacity=".42"/><rect x="115" y="188" width="8" height="1.6" fill="#dcdcaa" opacity=".42"/><rect x="123" y="188" width="4" height="1.6" fill="#cccccc" opacity=".42"/><rect x="128" y="188" width="1" height="1.6" fill="#cccccc" opacity=".42"/><rect x="24" y="190" width="6" height="1.6" fill="#c586c0" opacity=".42"/><rect x="31" y="190" width="4" height="1.6" fill="#569cd6" opacity=".42"/><rect x="35" y="190" width="1" height="1.6" fill="#cccccc" opacity=".42"/><rect x="20" y="192" width="1" height="1.6" fill="#cccccc" opacity=".42"/><rect x="20" y="194" width="4" height="1.6" fill="#c586c0" opacity=".42"/><rect x="25" y="194" width="1" height="1.6" fill="#cccccc" opacity=".42"/><rect x="24" y="196" width="6" height="1.6" fill="#c586c0" opacity=".42"/><rect x="31" y="196" width="5" height="1.6" fill="#569cd6" opacity=".42"/><rect x="36" y="196" width="1" height="1.6" fill="#cccccc" opacity=".42"/><rect x="20" y="198" width="1" height="1.6" fill="#cccccc" opacity=".42"/><rect x="16" y="200" width="1" height="1.6" fill="#cccccc" opacity=".42"/><rect x="12" y="202" width="1" height="1.6" fill="#cccccc" opacity=".42"/><rect x="8" y="204" width="1" height="1.6" fill="#cccccc" opacity=".42"/><rect x="8" y="208" width="6" height="1.6" fill="#c586c0" opacity=".42"/><rect x="15" y="208" width="4" height="1.6" fill="#569cd6" opacity=".42"/><rect x="19" y="208" width="1" height="1.6" fill="#cccccc" opacity=".42"/><rect x="4" y="210" width="1" height="1.6" fill="#cccccc" opacity=".42"/><rect x="4" y="216" width="6" height="1.6" fill="#569cd6" opacity=".42"/><rect x="11" y="216" width="4" height="1.6" fill="#4ec9b0" opacity=".42"/><rect x="15" y="216" width="1" height="1.6" fill="#cccccc" opacity=".42"/><rect x="16" y="216" width="6" height="1.6" fill="#4ec9b0" opacity=".42"/><rect x="22" y="216" width="1" height="1.6" fill="#cccccc" opacity=".42"/><rect x="24" y="216" width="10" height="1.6" fill="#dcdcaa" opacity=".42"/><rect x="34" y="216" width="1" height="1.6" fill="#cccccc" opacity=".42"/><rect x="35" y="216" width="5" height="1.6" fill="#4ec9b0" opacity=".42"/><rect x="41" y="216" width="5" height="1.6" fill="#9cdcfe" opacity=".42"/><rect x="46" y="216" width="1" height="1.6" fill="#cccccc" opacity=".42"/><rect x="48" y="216" width="8" height="1.6" fill="#4ec9b0" opacity=".42"/><rect x="57" y="216" width="8" height="1.6" fill="#9cdcfe" opacity=".42"/><rect x="65" y="216" width="1" height="1.6" fill="#cccccc" opacity=".42"/><rect x="67" y="216" width="1" height="1.6" fill="#cccccc" opacity=".42"/><rect x="8" y="218" width="4" height="1.6" fill="#4ec9b0" opacity=".42"/><rect x="12" y="218" width="1" height="1.6" fill="#cccccc" opacity=".42"/><rect x="13" y="218" width="6" height="1.6" fill="#4ec9b0" opacity=".42"/><rect x="19" y="218" width="1" height="1.6" fill="#cccccc" opacity=".42"/><rect x="21" y="218" width="7" height="1.6" fill="#9cdcfe" opacity=".42"/><rect x="29" y="218" width="1" height="1.6" fill="#cccccc" opacity=".42"/><rect x="31" y="218" width="3" height="1.6" fill="#c586c0" opacity=".42"/><rect x="35" y="218" width="9" height="1.6" fill="#4ec9b0" opacity=".42"/><rect x="44" y="218" width="1" height="1.6" fill="#cccccc" opacity=".42"/><rect x="45" y="218" width="6" height="1.6" fill="#4ec9b0" opacity=".42"/><rect x="51" y="218" width="4" height="1.6" fill="#cccccc" opacity=".42"/><rect x="8" y="222" width="6" height="1.6" fill="#4ec9b0" opacity=".42"/><rect x="15" y="222" width="4" height="1.6" fill="#9cdcfe" opacity=".42"/><rect x="20" y="222" width="1" height="1.6" fill="#cccccc" opacity=".42"/><rect x="22" y="222" width="8" height="1.6" fill="#9cdcfe" opacity=".42"/><rect x="30" y="222" width="1" height="1.6" fill="#cccccc" opacity=".42"/><rect x="31" y="222" width="7" height="1.6" fill="#dcdcaa" opacity=".42"/><rect x="38" y="222" width="3" height="1.6" fill="#cccccc" opacity=".42"/><rect x="8" y="224" width="6" height="1.6" fill="#4ec9b0" opacity=".42"/><rect x="15" y="224" width="2" height="1.6" fill="#9cdcfe" opacity=".42"/><rect x="18" y="224" width="1" height="1.6" fill="#cccccc" opacity=".42"/><rect x="20" y="224" width="8" height="1.6" fill="#9cdcfe" opacity=".42"/><rect x="28" y="224" width="1" height="1.6" fill="#cccccc" opacity=".42"/><rect x="29" y="224" width="5" height="1.6" fill="#dcdcaa" opacity=".42"/><rect x="34" y="224" width="3" height="1.6" fill="#cccccc" opacity=".42"/><rect x="8" y="228" width="3" height="1.6" fill="#4ec9b0" opacity=".42"/><rect x="12" y="228" width="15" height="1.6" fill="#9cdcfe" opacity=".42"/><rect x="28" y="228" width="1" height="1.6" fill="#cccccc" opacity=".42"/><rect x="30" y="228" width="9" height="1.6" fill="#4ec9b0" opacity=".42"/><rect x="39" y="228" width="1" height="1.6" fill="#cccccc" opacity=".42"/><rect x="40" y="228" width="14" height="1.6" fill="#dcdcaa" opacity=".42"/><rect x="54" y="228" width="1" height="1.6" fill="#cccccc" opacity=".42"/><rect x="55" y="228" width="4" height="1.6" fill="#9cdcfe" opacity=".42"/><rect x="59" y="228" width="2" height="1.6" fill="#cccccc" opacity=".42"/><rect x="8" y="230" width="3" height="1.6" fill="#4ec9b0" opacity=".42"/><rect x="12" y="230" width="12" height="1.6" fill="#9cdcfe" opacity=".42"/><rect x="25" y="230" width="1" height="1.6" fill="#cccccc" opacity=".42"/><rect x="27" y="230" width="9" height="1.6" fill="#4ec9b0" opacity=".42"/><rect x="36" y="230" width="1" height="1.6" fill="#cccccc" opacity=".42"/><rect x="37" y="230" width="11" height="1.6" fill="#dcdcaa" opacity=".42"/><rect x="48" y="230" width="1" height="1.6" fill="#cccccc" opacity=".42"/><rect x="49" y="230" width="4" height="1.6" fill="#9cdcfe" opacity=".42"/><rect x="53" y="230" width="2" height="1.6" fill="#cccccc" opacity=".42"/><rect x="8" y="234" width="3" height="1.6" fill="#4ec9b0" opacity=".42"/><rect x="12" y="234" width="13" height="1.6" fill="#9cdcfe" opacity=".42"/><rect x="26" y="234" width="1" height="1.6" fill="#cccccc" opacity=".42"/><rect x="28" y="234" width="9" height="1.6" fill="#4ec9b0" opacity=".42"/><rect x="37" y="234" width="1" height="1.6" fill="#cccccc" opacity=".42"/><rect x="38" y="234" width="14" height="1.6" fill="#dcdcaa" opacity=".42"/><rect x="52" y="234" width="1" height="1.6" fill="#cccccc" opacity=".42"/><rect x="53" y="234" width="2" height="1.6" fill="#9cdcfe" opacity=".42"/><rect x="55" y="234" width="2" height="1.6" fill="#cccccc" opacity=".42"/><rect x="8" y="236" width="3" height="1.6" fill="#4ec9b0" opacity=".42"/><rect x="12" y="236" width="10" height="1.6" fill="#9cdcfe" opacity=".42"/><rect x="23" y="236" width="1" height="1.6" fill="#cccccc" opacity=".42"/><rect x="25" y="236" width="9" height="1.6" fill="#4ec9b0" opacity=".42"/><rect x="34" y="236" width="1" height="1.6" fill="#cccccc" opacity=".42"/><rect x="35" y="236" width="11" height="1.6" fill="#dcdcaa" opacity=".42"/><rect x="46" y="236" width="1" height="1.6" fill="#cccccc" opacity=".42"/><rect x="47" y="236" width="2" height="1.6" fill="#9cdcfe" opacity=".42"/><rect x="49" y="236" width="2" height="1.6" fill="#cccccc" opacity=".42"/><rect x="8" y="240" width="2" height="1.6" fill="#c586c0" opacity=".42"/><rect x="11" y="240" width="1" height="1.6" fill="#cccccc" opacity=".42"/><rect x="12" y="240" width="15" height="1.6" fill="#9cdcfe" opacity=".42"/><rect x="28" y="240" width="1" height="1.6" fill="#cccccc" opacity=".42"/><rect x="30" y="240" width="13" height="1.6" fill="#9cdcfe" opacity=".42"/><rect x="43" y="240" width="1" height="1.6" fill="#cccccc" opacity=".42"/><rect x="45" y="240" width="1" height="1.6" fill="#cccccc" opacity=".42"/><rect x="12" y="242" width="2" height="1.6" fill="#c586c0" opacity=".42"/><rect x="15" y="242" width="1" height="1.6" fill="#cccccc" opacity=".42"/><rect x="16" y="242" width="12" height="1.6" fill="#9cdcfe" opacity=".42"/><rect x="29" y="242" width="1" height="1.6" fill="#cccccc" opacity=".42"/><rect x="31" y="242" width="10" height="1.6" fill="#9cdcfe" opacity=".42"/><rect x="41" y="242" width="1" height="1.6" fill="#cccccc" opacity=".42"/><rect x="43" y="242" width="1" height="1.6" fill="#cccccc" opacity=".42"/><rect x="16" y="244" width="3" height="1.6" fill="#4ec9b0" opacity=".42"/><rect x="20" y="244" width="1" height="1.6" fill="#9cdcfe" opacity=".42"/><rect x="22" y="244" width="1" height="1.6" fill="#cccccc" opacity=".42"/><rect x="24" y="244" width="12" height="1.6" fill="#9cdcfe" opacity=".42"/><rect x="36" y="244" width="1" height="1.6" fill="#cccccc" opacity=".42"/><rect x="37" y="244" width="1" height="1.6" fill="#b5cea8" opacity=".42"/><rect x="38" y="244" width="1" height="1.6" fill="#cccccc" opacity=".42"/><rect x="16" y="246" width="3" height="1.6" fill="#c586c0" opacity=".42"/><rect x="20" y="246" width="1" height="1.6" fill="#cccccc" opacity=".42"/><rect x="21" y="246" width="3" height="1.6" fill="#4ec9b0" opacity=".42"/><rect x="25" y="246" width="1" height="1.6" fill="#9cdcfe" opacity=".42"/><rect x="27" y="246" width="1" height="1.6" fill="#cccccc" opacity=".42"/><rect x="29" y="246" width="15" height="1.6" fill="#9cdcfe" opacity=".42"/><rect x="44" y="246" width="1" height="1.6" fill="#cccccc" opacity=".42"/><rect x="45" y="246" width="1" height="1.6" fill="#b5cea8" opacity=".42"/><rect x="46" y="246" width="1" height="1.6" fill="#cccccc" opacity=".42"/><rect x="48" y="246" width="1" height="1.6" fill="#9cdcfe" opacity=".42"/><rect x="50" y="246" width="1" height="1.6" fill="#cccccc" opacity=".42"/><rect x="52" y="246" width="13" height="1.6" fill="#9cdcfe" opacity=".42"/><rect x="65" y="246" width="1" height="1.6" fill="#cccccc" opacity=".42"/><rect x="67" y="246" width="1" height="1.6" fill="#9cdcfe" opacity=".42"/><rect x="68" y="246" width="3" height="1.6" fill="#cccccc" opacity=".42"/><rect x="72" y="246" width="1" height="1.6" fill="#cccccc" opacity=".42"/><rect x="20" y="248" width="6" height="1.6" fill="#4ec9b0" opacity=".42"/><rect x="27" y="248" width="6" height="1.6" fill="#9cdcfe" opacity=".42"/><rect x="34" y="248" width="1" height="1.6" fill="#cccccc" opacity=".42"/><rect x="36" y="248" width="5" height="1.6" fill="#9cdcfe" opacity=".42"/><rect x="41" y="248" width="1" height="1.6" fill="#cccccc" opacity=".42"/><rect x="42" y="248" width="9" height="1.6" fill="#dcdcaa" opacity=".42"/><rect x="51" y="248" width="1" height="1.6" fill="#cccccc" opacity=".42"/><rect x="52" y="248" width="1" height="1.6" fill="#9cdcfe" opacity=".42"/><rect x="53" y="248" width="1" height="1.6" fill="#cccccc" opacity=".42"/><rect x="55" y="248" width="1" height="1.6" fill="#9cdcfe" opacity=".42"/><rect x="56" y="248" width="2" height="1.6" fill="#cccccc" opacity=".42"/><rect x="20" y="250" width="7" height="1.6" fill="#9cdcfe" opacity=".42"/><rect x="27" y="250" width="1" height="1.6" fill="#cccccc" opacity=".42"/><rect x="28" y="250" width="3" height="1.6" fill="#dcdcaa" opacity=".42"/><rect x="31" y="250" width="1" height="1.6" fill="#cccccc" opacity=".42"/><rect x="32" y="250" width="6" height="1.6" fill="#9cdcfe" opacity=".42"/><rect x="38" y="250" width="2" height="1.6" fill="#cccccc" opacity=".42"/><rect x="20" y="252" width="1" height="1.6" fill="#9cdcfe" opacity=".42"/><rect x="21" y="252" width="3" height="1.6" fill="#cccccc" opacity=".42"/><rect x="16" y="254" width="1" height="1.6" fill="#cccccc" opacity=".42"/><rect x="12" y="256" width="1" height="1.6" fill="#cccccc" opacity=".42"/><rect x="12" y="258" width="4" height="1.6" fill="#c586c0" opacity=".42"/><rect x="17" y="258" width="1" height="1.6" fill="#cccccc" opacity=".42"/><rect x="16" y="260" width="3" height="1.6" fill="#4ec9b0" opacity=".42"/><rect x="20" y="260" width="1" height="1.6" fill="#9cdcfe" opacity=".42"/><rect x="22" y="260" width="1" height="1.6" fill="#cccccc" opacity=".42"/><rect x="24" y="260" width="12" height="1.6" fill="#9cdcfe" opacity=".42"/><rect x="36" y="260" width="1" height="1.6" fill="#cccccc" opacity=".42"/><rect x="37" y="260" width="1" height="1.6" fill="#b5cea8" opacity=".42"/><rect x="38" y="260" width="1" height="1.6" fill="#cccccc" opacity=".42"/><rect x="16" y="262" width="3" height="1.6" fill="#c586c0" opacity=".42"/><rect x="20" y="262" width="1" height="1.6" fill="#cccccc" opacity=".42"/><rect x="21" y="262" width="3" height="1.6" fill="#4ec9b0" opacity=".42"/><rect x="25" y="262" width="1" height="1.6" fill="#9cdcfe" opacity=".42"/><rect x="27" y="262" width="1" height="1.6" fill="#cccccc" opacity=".42"/><rect x="29" y="262" width="15" height="1.6" fill="#9cdcfe" opacity=".42"/><rect x="44" y="262" width="1" height="1.6" fill="#cccccc" opacity=".42"/><rect x="45" y="262" width="1" height="1.6" fill="#b5cea8" opacity=".42"/><rect x="46" y="262" width="1" height="1.6" fill="#cccccc" opacity=".42"/><rect x="48" y="262" width="1" height="1.6" fill="#9cdcfe" opacity=".42"/><rect x="50" y="262" width="1" height="1.6" fill="#cccccc" opacity=".42"/><rect x="52" y="262" width="13" height="1.6" fill="#9cdcfe" opacity=".42"/><rect x="65" y="262" width="1" height="1.6" fill="#cccccc" opacity=".42"/><rect x="67" y="262" width="1" height="1.6" fill="#9cdcfe" opacity=".42"/><rect x="68" y="262" width="3" height="1.6" fill="#cccccc" opacity=".42"/><rect x="72" y="262" width="1" height="1.6" fill="#cccccc" opacity=".42"/><rect x="20" y="264" width="2" height="1.6" fill="#c586c0" opacity=".42"/><rect x="23" y="264" width="1" height="1.6" fill="#cccccc" opacity=".42"/><rect x="24" y="264" width="1" height="1.6" fill="#9cdcfe" opacity=".42"/><rect x="26" y="264" width="1" height="1.6" fill="#cccccc" opacity=".42"/><rect x="28" y="264" width="1" height="1.6" fill="#b5cea8" opacity=".42"/><rect x="29" y="264" width="1" height="1.6" fill="#cccccc" opacity=".42"/><rect x="31" y="264" width="5" height="1.6" fill="#569cd6" opacity=".42"/><rect x="36" y="264" width="1" height="1.6" fill="#cccccc" opacity=".42"/><rect x="20" y="266" width="6" height="1.6" fill="#4ec9b0" opacity=".42"/><rect x="27" y="266" width="6" height="1.6" fill="#9cdcfe" opacity=".42"/><rect x="34" y="266" width="1" height="1.6" fill="#cccccc" opacity=".42"/><rect x="36" y="266" width="5" height="1.6" fill="#9cdcfe" opacity=".42"/><rect x="41" y="266" width="1" height="1.6" fill="#cccccc" opacity=".42"/><rect x="42" y="266" width="9" height="1.6" fill="#dcdcaa" opacity=".42"/><rect x="51" y="266" width="1" height="1.6" fill="#cccccc" opacity=".42"/><rect x="52" y="266" width="1" height="1.6" fill="#9cdcfe" opacity=".42"/><rect x="53" y="266" width="1" height="1.6" fill="#cccccc" opacity=".42"/><rect x="55" y="266" width="1" height="1.6" fill="#9cdcfe" opacity=".42"/><rect x="56" y="266" width="2" height="1.6" fill="#cccccc" opacity=".42"/><rect x="20" y="268" width="7" height="1.6" fill="#9cdcfe" opacity=".42"/><rect x="27" y="268" width="1" height="1.6" fill="#cccccc" opacity=".42"/><rect x="28" y="268" width="3" height="1.6" fill="#dcdcaa" opacity=".42"/><rect x="31" y="268" width="1" height="1.6" fill="#cccccc" opacity=".42"/><rect x="32" y="268" width="6" height="1.6" fill="#9cdcfe" opacity=".42"/><rect x="38" y="268" width="2" height="1.6" fill="#cccccc" opacity=".42"/><rect x="20" y="270" width="1" height="1.6" fill="#9cdcfe" opacity=".42"/><rect x="21" y="270" width="3" height="1.6" fill="#cccccc" opacity=".42"/><rect x="16" y="272" width="1" height="1.6" fill="#cccccc" opacity=".42"/><rect x="12" y="274" width="1" height="1.6" fill="#cccccc" opacity=".42"/><rect x="8" y="276" width="1" height="1.6" fill="#cccccc" opacity=".42"/><rect x="8" y="278" width="4" height="1.6" fill="#c586c0" opacity=".42"/><rect x="13" y="278" width="1" height="1.6" fill="#cccccc" opacity=".42"/><rect x="12" y="280" width="2" height="1.6" fill="#c586c0" opacity=".42"/><rect x="15" y="280" width="1" height="1.6" fill="#cccccc" opacity=".42"/><rect x="16" y="280" width="12" height="1.6" fill="#9cdcfe" opacity=".42"/><rect x="29" y="280" width="1" height="1.6" fill="#cccccc" opacity=".42"/><rect x="31" y="280" width="10" height="1.6" fill="#9cdcfe" opacity=".42"/><rect x="41" y="280" width="1" height="1.6" fill="#cccccc" opacity=".42"/><rect x="43" y="280" width="1" height="1.6" fill="#cccccc" opacity=".42"/><rect x="16" y="282" width="3" height="1.6" fill="#4ec9b0" opacity=".42"/><rect x="20" y="282" width="1" height="1.6" fill="#9cdcfe" opacity=".42"/><rect x="22" y="282" width="1" height="1.6" fill="#cccccc" opacity=".42"/><rect x="24" y="282" width="12" height="1.6" fill="#9cdcfe" opacity=".42"/><rect x="36" y="282" width="1" height="1.6" fill="#cccccc" opacity=".42"/><rect x="37" y="282" width="1" height="1.6" fill="#b5cea8" opacity=".42"/><rect x="38" y="282" width="1" height="1.6" fill="#cccccc" opacity=".42"/><rect x="16" y="284" width="3" height="1.6" fill="#c586c0" opacity=".42"/><rect x="20" y="284" width="1" height="1.6" fill="#cccccc" opacity=".42"/><rect x="21" y="284" width="3" height="1.6" fill="#4ec9b0" opacity=".42"/><rect x="25" y="284" width="1" height="1.6" fill="#9cdcfe" opacity=".42"/><rect x="27" y="284" width="1" height="1.6" fill="#cccccc" opacity=".42"/><rect x="29" y="284" width="15" height="1.6" fill="#9cdcfe" opacity=".42"/><rect x="44" y="284" width="1" height="1.6" fill="#cccccc" opacity=".42"/><rect x="45" y="284" width="1" height="1.6" fill="#b5cea8" opacity=".42"/><rect x="46" y="284" width="1" height="1.6" fill="#cccccc" opacity=".42"/><rect x="48" y="284" width="1" height="1.6" fill="#9cdcfe" opacity=".42"/><rect x="50" y="284" width="1" height="1.6" fill="#cccccc" opacity=".42"/><rect x="52" y="284" width="13" height="1.6" fill="#9cdcfe" opacity=".42"/><rect x="65" y="284" width="1" height="1.6" fill="#cccccc" opacity=".42"/><rect x="67" y="284" width="1" height="1.6" fill="#9cdcfe" opacity=".42"/><rect x="68" y="284" width="3" height="1.6" fill="#cccccc" opacity=".42"/><rect x="72" y="284" width="1" height="1.6" fill="#cccccc" opacity=".42"/><rect x="20" y="286" width="6" height="1.6" fill="#4ec9b0" opacity=".42"/><rect x="27" y="286" width="6" height="1.6" fill="#9cdcfe" opacity=".42"/><rect x="34" y="286" width="1" height="1.6" fill="#cccccc" opacity=".42"/><rect x="36" y="286" width="5" height="1.6" fill="#9cdcfe" opacity=".42"/><rect x="41" y="286" width="1" height="1.6" fill="#cccccc" opacity=".42"/><rect x="42" y="286" width="9" height="1.6" fill="#dcdcaa" opacity=".42"/><rect x="51" y="286" width="1" height="1.6" fill="#cccccc" opacity=".42"/><rect x="52" y="286" width="1" height="1.6" fill="#9cdcfe" opacity=".42"/><rect x="53" y="286" width="1" height="1.6" fill="#cccccc" opacity=".42"/><rect x="55" y="286" width="1" height="1.6" fill="#9cdcfe" opacity=".42"/><rect x="56" y="286" width="2" height="1.6" fill="#cccccc" opacity=".42"/><rect x="20" y="288" width="7" height="1.6" fill="#9cdcfe" opacity=".42"/><rect x="27" y="288" width="1" height="1.6" fill="#cccccc" opacity=".42"/><rect x="28" y="288" width="3" height="1.6" fill="#dcdcaa" opacity=".42"/><rect x="31" y="288" width="1" height="1.6" fill="#cccccc" opacity=".42"/><rect x="32" y="288" width="6" height="1.6" fill="#9cdcfe" opacity=".42"/><rect x="38" y="288" width="2" height="1.6" fill="#cccccc" opacity=".42"/><rect x="20" y="290" width="1" height="1.6" fill="#9cdcfe" opacity=".42"/><rect x="21" y="290" width="3" height="1.6" fill="#cccccc" opacity=".42"/><rect x="16" y="292" width="1" height="1.6" fill="#cccccc" opacity=".42"/><rect x="12" y="294" width="1" height="1.6" fill="#cccccc" opacity=".42"/><rect x="12" y="296" width="4" height="1.6" fill="#c586c0" opacity=".42"/><rect x="17" y="296" width="1" height="1.6" fill="#cccccc" opacity=".42"/><rect x="16" y="298" width="3" height="1.6" fill="#4ec9b0" opacity=".42"/><rect x="20" y="298" width="1" height="1.6" fill="#9cdcfe" opacity=".42"/><rect x="22" y="298" width="1" height="1.6" fill="#cccccc" opacity=".42"/><rect x="24" y="298" width="12" height="1.6" fill="#9cdcfe" opacity=".42"/><rect x="36" y="298" width="1" height="1.6" fill="#cccccc" opacity=".42"/><rect x="37" y="298" width="1" height="1.6" fill="#b5cea8" opacity=".42"/><rect x="38" y="298" width="1" height="1.6" fill="#cccccc" opacity=".42"/><rect x="16" y="300" width="3" height="1.6" fill="#c586c0" opacity=".42"/><rect x="20" y="300" width="1" height="1.6" fill="#cccccc" opacity=".42"/><rect x="21" y="300" width="3" height="1.6" fill="#4ec9b0" opacity=".42"/><rect x="25" y="300" width="1" height="1.6" fill="#9cdcfe" opacity=".42"/><rect x="27" y="300" width="1" height="1.6" fill="#cccccc" opacity=".42"/><rect x="29" y="300" width="15" height="1.6" fill="#9cdcfe" opacity=".42"/><rect x="44" y="300" width="1" height="1.6" fill="#cccccc" opacity=".42"/><rect x="45" y="300" width="1" height="1.6" fill="#b5cea8" opacity=".42"/><rect x="46" y="300" width="1" height="1.6" fill="#cccccc" opacity=".42"/><rect x="48" y="300" width="1" height="1.6" fill="#9cdcfe" opacity=".42"/><rect x="50" y="300" width="1" height="1.6" fill="#cccccc" opacity=".42"/><rect x="52" y="300" width="13" height="1.6" fill="#9cdcfe" opacity=".42"/><rect x="66" y="300" width="2" height="1.6" fill="#cccccc" opacity=".42"/><rect x="69" y="300" width="1" height="1.6" fill="#9cdcfe" opacity=".42"/><rect x="71" y="300" width="2" height="1.6" fill="#cccccc" opacity=".42"/><rect x="74" y="300" width="1" height="1.6" fill="#b5cea8" opacity=".42"/><rect x="75" y="300" width="1" height="1.6" fill="#cccccc" opacity=".42"/><rect x="77" y="300" width="1" height="1.6" fill="#9cdcfe" opacity=".42"/><rect x="78" y="300" width="3" height="1.6" fill="#cccccc" opacity=".42"/><rect x="82" y="300" width="1" height="1.6" fill="#cccccc" opacity=".42"/><rect x="20" y="302" width="6" height="1.6" fill="#4ec9b0" opacity=".42"/><rect x="27" y="302" width="6" height="1.6" fill="#9cdcfe" opacity=".42"/><rect x="34" y="302" width="1" height="1.6" fill="#cccccc" opacity=".42"/><rect x="36" y="302" width="5" height="1.6" fill="#9cdcfe" opacity=".42"/><rect x="41" y="302" width="1" height="1.6" fill="#cccccc" opacity=".42"/><rect x="42" y="302" width="9" height="1.6" fill="#dcdcaa" opacity=".42"/><rect x="51" y="302" width="1" height="1.6" fill="#cccccc" opacity=".42"/><rect x="52" y="302" width="1" height="1.6" fill="#9cdcfe" opacity=".42"/><rect x="53" y="302" width="1" height="1.6" fill="#cccccc" opacity=".42"/><rect x="55" y="302" width="1" height="1.6" fill="#9cdcfe" opacity=".42"/><rect x="56" y="302" width="2" height="1.6" fill="#cccccc" opacity=".42"/><rect x="20" y="304" width="7" height="1.6" fill="#9cdcfe" opacity=".42"/><rect x="27" y="304" width="1" height="1.6" fill="#cccccc" opacity=".42"/><rect x="28" y="304" width="3" height="1.6" fill="#dcdcaa" opacity=".42"/><rect x="31" y="304" width="1" height="1.6" fill="#cccccc" opacity=".42"/><rect x="32" y="304" width="6" height="1.6" fill="#9cdcfe" opacity=".42"/><rect x="38" y="304" width="2" height="1.6" fill="#cccccc" opacity=".42"/><rect x="20" y="306" width="1" height="1.6" fill="#9cdcfe" opacity=".42"/><rect x="21" y="306" width="3" height="1.6" fill="#cccccc" opacity=".42"/><rect x="16" y="308" width="1" height="1.6" fill="#cccccc" opacity=".42"/><rect x="12" y="310" width="1" height="1.6" fill="#cccccc" opacity=".42"/><rect x="8" y="312" width="1" height="1.6" fill="#cccccc" opacity=".42"/><rect x="8" y="316" width="6" height="1.6" fill="#c586c0" opacity=".42"/><rect x="15" y="316" width="7" height="1.6" fill="#9cdcfe" opacity=".42"/><rect x="22" y="316" width="1" height="1.6" fill="#cccccc" opacity=".42"/><rect x="4" y="320" width="1" height="1.6" fill="#cccccc" opacity=".42"/><rect x="0" y="324" width="1" height="1.6" fill="#cccccc" opacity=".42"/></svg>
<div class="a" style="left:1906px;top:87px;width:1px;height:667px;background:#121212"></div>
<div class="a" style="left:1907px;top:252px;width:13px;height:117px;background:#2e2e2e"></div>
<div class="a" style="left:1907px;top:308px;width:13px;height:2px;background:#6b6b6b"></div>
<div class="a" style="left:1911px;top:331px;width:5px;height:6px;background:#6b6b6b"></div>
<div id="panel" class="a"></div>
<div class="a " style="left:324px;top:767px;font-size:11px;line-height:13px;color:#e7e7e7;letter-spacing:-0.65px">PROBLEMS</div>
<div class="a " style="left:432px;top:767px;font-size:11px;line-height:13px;color:#9d9d9d;letter-spacing:-0.65px">OUTPUT</div>
<div class="a " style="left:497px;top:767px;font-size:11px;line-height:13px;color:#9d9d9d;letter-spacing:-0.65px">DEBUG CONSOLE</div>
<div class="a " style="left:605px;top:767px;font-size:11px;line-height:13px;color:#9d9d9d;letter-spacing:-0.65px">TERMINAL</div>
<div class="a " style="left:680px;top:767px;font-size:11px;line-height:13px;color:#9d9d9d;letter-spacing:-0.65px">PORTS</div>
<div class="a" style="left:388px;top:763px;width:22px;height:18px;border-radius:9px;background:#0078d4"></div>
<div class="a " style="left:388px;top:765px;width:22px;text-align:center;font-size:11px;line-height:14px;color:#fff">95</div>
<div class="a" style="left:322px;top:785px;width:88px;height:1px;background:#0078d4"></div>
<div class="a" style="left:1626px;top:761px;width:178px;height:24px;background:#2a2a2a;border:1px solid #3c3c3c;border-radius:2px"></div>
<div class="a " style="left:1634px;top:765px;font-size:12.5px;line-height:16px;color:#8a8a8a">Filter (e.g. text, **/*.ts, !**/...</div>
<svg style="left:1782px;top:766px" width="15" height="14"><path d="M0.8 0.8h13.4l-5.2 6.2v6l-3-1.6V7z" fill="none" stroke="#cccccc" stroke-width="1.2" stroke-linejoin="round"/></svg>
<svg style="left:1813px;top:765px" width="15" height="14"><rect x="4.5" y="0.6" width="9.5" height="8.5" rx="1.5" fill="none" stroke="#cccccc" stroke-width="1.2"/><path d="M1 4v8.5h9.5" fill="none" stroke="#cccccc" stroke-width="1.2"/><path d="M6.5 3.5h5M6.5 6h5" stroke="#cccccc" stroke-width="1"/></svg>
<svg style="left:1838px;top:766px" width="14" height="12"><path d="M0 0.8h13M0 4.3h13M0 7.8h11M0 11.3h7" stroke="#cccccc" stroke-width="1.2"/></svg>
<svg style="left:1864px;top:767px" width="13" height="8"><path d="M1 7l5.5-5.5L12 7" fill="none" stroke="#cccccc" stroke-width="1.3"/></svg>
<svg style="left:1891px;top:766px" width="12" height="12"><path d="M1 1l10 10M11 1 1 11" stroke="#cccccc" stroke-width="1.3"/></svg>
<div class="a" style="left:304px;top:788px;width:1616px;height:222px;overflow:hidden">
<svg style="left:45px;top:-7px" width="15" height="15" viewBox="0 0 15 15"><circle cx="7.5" cy="7.5" r="6.6" fill="none" stroke="#f14c4c" stroke-width="1.2"/><path d="M4.4 4.4l6.2 6.2M10.6 4.4l-6.2 6.2" stroke="#f14c4c" stroke-width="1.2"/></svg>
<div class="a" style="left:66px;top:-10px;line-height:22px;font-size:13.03px;color:#cccccc">bcel 6.x before 6.6.0 is vulnerable to out-of-bounds write, potentially giving an attacker the ability to control the bytecode generated by bcel&#x27;s API. Upgrade to bcel 6.6.0.<span style="color:#a0a0a0;margin-left:7px;font-size:12.84px">Semgrep(ssc-f8b20305-dc5f-46c2-bf30-197d0035ca71)</span><span style="color:#a0a0a0;margin-left:6px;font-size:12.6px">[Ln 161, Col 3]</span></div>
<div class="a" style="left:0;top:11px;width:1616px;height:22px;background:#323232;border:1px solid #0078d4"></div>
<svg style="left:45px;top:15px" width="15" height="15" viewBox="0 0 15 15"><circle cx="7.5" cy="7.5" r="6.6" fill="none" stroke="#ffffff" stroke-width="1.2"/><path d="M4.4 4.4l6.2 6.2M10.6 4.4l-6.2 6.2" stroke="#ffffff" stroke-width="1.2"/></svg>
<div class="a" style="left:66px;top:12px;line-height:22px;font-size:13.03px;color:#ffffff">bcel 6.x before 6.6.0 is vulnerable to out-of-bounds write, potentially giving an attacker the ability to control the bytecode generated by bcel&#x27;s API. Upgrade to bcel 6.6.0.<span style="color:#a0a0a0;margin-left:7px;font-size:12.84px">Semgrep(ssc-f8b20305-dc5f-46c2-bf30-197d0035ca71)</span><span style="color:#a0a0a0;margin-left:6px;font-size:12.6px">[Ln 162, Col 3]</span></div>
<svg style="left:45px;top:37px" width="15" height="15" viewBox="0 0 15 15"><circle cx="7.5" cy="7.5" r="6.6" fill="none" stroke="#f14c4c" stroke-width="1.2"/><path d="M4.4 4.4l6.2 6.2M10.6 4.4l-6.2 6.2" stroke="#f14c4c" stroke-width="1.2"/></svg>
<div class="a" style="left:66px;top:34px;line-height:22px;font-size:13.03px;color:#cccccc">bcel 6.x before 6.6.0 is vulnerable to out-of-bounds write, potentially giving an attacker the ability to control the bytecode generated by bcel&#x27;s API. Upgrade to bcel 6.6.0.<span style="color:#a0a0a0;margin-left:7px;font-size:12.84px">Semgrep(ssc-f8b20305-dc5f-46c2-bf30-197d0035ca71)</span><span style="color:#a0a0a0;margin-left:6px;font-size:12.6px">[Ln 163, Col 3]</span></div>
<svg style="left:45px;top:59px" width="15" height="15" viewBox="0 0 15 15"><circle cx="7.5" cy="7.5" r="6.6" fill="none" stroke="#f14c4c" stroke-width="1.2"/><path d="M4.4 4.4l6.2 6.2M10.6 4.4l-6.2 6.2" stroke="#f14c4c" stroke-width="1.2"/></svg>
<div class="a" style="left:66px;top:56px;line-height:22px;font-size:13.03px;color:#cccccc">bcel 6.x before 6.6.0 is vulnerable to out-of-bounds write, potentially giving an attacker the ability to control the bytecode generated by bcel&#x27;s API. Upgrade to bcel 6.6.0.<span style="color:#a0a0a0;margin-left:7px;font-size:12.84px">Semgrep(ssc-f8b20305-dc5f-46c2-bf30-197d0035ca71)</span><span style="color:#a0a0a0;margin-left:6px;font-size:12.6px">[Ln 164, Col 3]</span></div>
<svg style="left:45px;top:81px" width="15" height="15" viewBox="0 0 15 15"><circle cx="7.5" cy="7.5" r="6.6" fill="none" stroke="#f14c4c" stroke-width="1.2"/><path d="M4.4 4.4l6.2 6.2M10.6 4.4l-6.2 6.2" stroke="#f14c4c" stroke-width="1.2"/></svg>
<div class="a" style="left:66px;top:78px;line-height:22px;font-size:13.03px;color:#cccccc">bcel 6.x before 6.6.0 is vulnerable to out-of-bounds write, potentially giving an attacker the ability to control the bytecode generated by bcel&#x27;s API. Upgrade to bcel 6.6.0.<span style="color:#a0a0a0;margin-left:7px;font-size:12.84px">Semgrep(ssc-f8b20305-dc5f-46c2-bf30-197d0035ca71)</span><span style="color:#a0a0a0;margin-left:6px;font-size:12.6px">[Ln 165, Col 3]</span></div>
<svg style="left:45px;top:103px" width="15" height="15" viewBox="0 0 15 15"><circle cx="7.5" cy="7.5" r="6.6" fill="none" stroke="#f14c4c" stroke-width="1.2"/><path d="M4.4 4.4l6.2 6.2M10.6 4.4l-6.2 6.2" stroke="#f14c4c" stroke-width="1.2"/></svg>
<div class="a" style="left:66px;top:100px;line-height:22px;font-size:13.03px;color:#cccccc">bcel 6.x before 6.6.0 is vulnerable to out-of-bounds write, potentially giving an attacker the ability to control the bytecode generated by bcel&#x27;s API. Upgrade to bcel 6.6.0.<span style="color:#a0a0a0;margin-left:7px;font-size:12.84px">Semgrep(ssc-f8b20305-dc5f-46c2-bf30-197d0035ca71)</span><span style="color:#a0a0a0;margin-left:6px;font-size:12.6px">[Ln 249, Col 3]</span></div>
<svg style="left:45px;top:125px" width="15" height="15" viewBox="0 0 15 15"><circle cx="7.5" cy="7.5" r="6.6" fill="none" stroke="#f14c4c" stroke-width="1.2"/><path d="M4.4 4.4l6.2 6.2M10.6 4.4l-6.2 6.2" stroke="#f14c4c" stroke-width="1.2"/></svg>
<div class="a" style="left:66px;top:122px;line-height:22px;font-size:13.03px;color:#cccccc">org.apache.logging.log4j:log4j-core &gt;= 2.4, &lt; 2.12.2,&lt; 2.3.1,&gt;= 2.13.0, &lt; 2.15.0 are vulnerable to remote code execution when logging untrusted or user controlled data.<span style="color:#a0a0a0;margin-left:7px;font-size:12.84px">Semgrep(ssc-bcdb2de4-6003-4dfd-a110-2ff446ffb726)</span><span style="color:#a0a0a0;margin-left:6px;font-size:12.6px">[Ln 265, Col 4]</span></div>
<svg style="left:45px;top:147px" width="15" height="15" viewBox="0 0 15 15"><circle cx="7.5" cy="7.5" r="6.6" fill="none" stroke="#f14c4c" stroke-width="1.2"/><path d="M4.4 4.4l6.2 6.2M10.6 4.4l-6.2 6.2" stroke="#f14c4c" stroke-width="1.2"/></svg>
<div class="a" style="left:66px;top:144px;line-height:22px;font-size:13.03px;color:#cccccc">org.apache.logging.log4j:log4j-core &gt;= 2.4, &lt; 2.12.2,&lt; 2.3.1,&gt;= 2.13.0, &lt; 2.15.0 are vulnerable to remote code execution when logging untrusted or user controlled data.<span style="color:#a0a0a0;margin-left:7px;font-size:12.84px">Semgrep(ssc-bcdb2de4-6003-4dfd-a110-2ff446ffb726)</span><span style="color:#a0a0a0;margin-left:6px;font-size:12.6px">[Ln 268, Col 4]</span></div>
<svg style="left:45px;top:169px" width="15" height="15" viewBox="0 0 15 15"><circle cx="7.5" cy="7.5" r="6.6" fill="none" stroke="#f14c4c" stroke-width="1.2"/><path d="M4.4 4.4l6.2 6.2M10.6 4.4l-6.2 6.2" stroke="#f14c4c" stroke-width="1.2"/></svg>
<div class="a" style="left:66px;top:166px;line-height:22px;font-size:13.03px;color:#cccccc">org.apache.logging.log4j:log4j-core &gt;= 2.4, &lt; 2.12.2,&lt; 2.3.1,&gt;= 2.13.0, &lt; 2.15.0 are vulnerable to remote code execution when logging untrusted or user controlled data.<span style="color:#a0a0a0;margin-left:7px;font-size:12.84px">Semgrep(ssc-bcdb2de4-6003-4dfd-a110-2ff446ffb726)</span><span style="color:#a0a0a0;margin-left:6px;font-size:12.6px">[Ln 281, Col 6]</span></div>
<svg style="left:45px;top:191px" width="15" height="15" viewBox="0 0 15 15"><circle cx="7.5" cy="7.5" r="6.6" fill="none" stroke="#f14c4c" stroke-width="1.2"/><path d="M4.4 4.4l6.2 6.2M10.6 4.4l-6.2 6.2" stroke="#f14c4c" stroke-width="1.2"/></svg>
<div class="a" style="left:66px;top:188px;line-height:22px;font-size:13.03px;color:#cccccc">org.apache.logging.log4j:log4j-core &gt;= 2.4, &lt; 2.12.2,&lt; 2.3.1,&gt;= 2.13.0, &lt; 2.15.0 are vulnerable to remote code execution when logging untrusted or user controlled data.<span style="color:#a0a0a0;margin-left:7px;font-size:12.84px">Semgrep(ssc-bcdb2de4-6003-4dfd-a110-2ff446ffb726)</span><span style="color:#a0a0a0;margin-left:6px;font-size:12.6px">[Ln 314, Col 3]</span></div>
<svg style="left:45px;top:213px" width="15" height="15" viewBox="0 0 15 15"><circle cx="7.5" cy="7.5" r="6.6" fill="none" stroke="#f14c4c" stroke-width="1.2"/><path d="M4.4 4.4l6.2 6.2M10.6 4.4l-6.2 6.2" stroke="#f14c4c" stroke-width="1.2"/></svg>
<div class="a" style="left:66px;top:210px;line-height:22px;font-size:13.03px;color:#cccccc">org.apache.logging.log4j:log4j-core &gt;= 2.4, &lt; 2.12.2,&lt; 2.3.1,&gt;= 2.13.0, &lt; 2.15.0 are vulnerable to remote code execution when logging untrusted or user controlled data.<span style="color:#a0a0a0;margin-left:7px;font-size:12.84px">Semgrep(ssc-bcdb2de4-6003-4dfd-a110-2ff446ffb726)</span><span style="color:#a0a0a0;margin-left:6px;font-size:12.6px">[Ln 315, Col 3]</span></div>
</div>
<div class="a" style="left:320px;top:789px;width:1px;height:221px;background:#585858"></div>
<div id="status" class="a"></div>
<div class="a" style="left:0;top:1011px;width:106px;height:21px;background:#0078d4"></div>
<svg style="left:12px;top:1014px" width="12" height="13"><path d="M0.8 5l4 3.6-4 3.6M11 0.8 7 4.4l4 3.6" fill="none" stroke="#fff" stroke-width="1.2"/></svg>
<div class="a " style="left:27.5px;top:1014px;font-size:11.5px;line-height:15px;color:#ffffff">WSL: Ubuntu</div>
<svg style="left:115px;top:1014px" width="13.5" height="13.5" viewBox="0 0 15 15"><circle cx="7.5" cy="7.5" r="6.6" fill="none" stroke="#cccccc" stroke-width="1.2"/><path d="M4.4 4.4l6.2 6.2M10.6 4.4l-6.2 6.2" stroke="#cccccc" stroke-width="1.2"/></svg>
<div class="a " style="left:131px;top:1014px;font-size:11.5px;line-height:15px;color:#cccccc">95</div>
<svg style="left:148px;top:1014px" width="13" height="13"><path d="M6.5 1L12.3 12H0.7z" fill="none" stroke="#cccccc" stroke-width="1.1" stroke-linejoin="round"/><path d="M6.5 4.8v3.8M6.5 9.8v1.2" stroke="#cccccc" stroke-width="1.1"/></svg>
<div class="a " style="left:165px;top:1014px;font-size:11.5px;line-height:15px;color:#cccccc">1</div>
<svg style="left:189px;top:1014px" width="13" height="13"><circle cx="6.5" cy="5" r="1.3" fill="none" stroke="#cccccc"/><path d="M3.5 2a4.3 4.3 0 0 0 0 6M9.5 2a4.3 4.3 0 0 1 0 6M1.5 0.5a6.5 6.5 0 0 0 0 9M11.5 0.5a6.5 6.5 0 0 1 0 9M6.5 6.5L4 12.5M6.5 6.5l2.5 6" fill="none" stroke="#cccccc" stroke-width="1"/></svg>
<div class="a " style="left:204px;top:1014px;font-size:11.5px;line-height:15px;color:#cccccc">0</div>
<div class="a " style="left:1462px;top:1014px;font-size:11.5px;line-height:15px;color:#cccccc">Ln 67, Col 45 (24 selected)</div>
<div class="a " style="left:1616px;top:1014px;font-size:11.5px;line-height:15px;color:#cccccc">Tab Size: 4</div>
<div class="a " style="left:1688px;top:1014px;font-size:11.5px;line-height:15px;color:#cccccc">UTF-8</div>
<div class="a " style="left:1735px;top:1014px;font-size:11.5px;line-height:15px;color:#cccccc">CRLF</div>
<div class="a " style="left:1775px;top:1014px;font-size:11.5px;line-height:15px;color:#cccccc;letter-spacing:-1px">{ }</div>
<div class="a " style="left:1795px;top:1014px;font-size:11.5px;line-height:15px;color:#cccccc">Java</div>
<svg style="left:1830px;top:1017px" width="16" height="8"><circle cx="2.8" cy="4" r="2.2" fill="none" stroke="#cccccc" stroke-width="1.4"/><circle cx="8" cy="4" r="2.2" fill="none" stroke="#cccccc" stroke-width="1.4"/><circle cx="13.2" cy="4" r="2.2" fill="none" stroke="#cccccc" stroke-width="1.4"/></svg>
<svg style="left:1861px;top:1014px" width="15" height="14"><circle cx="5.5" cy="6" r="2.6" fill="none" stroke="#cccccc" stroke-width="1.1"/><path d="M0.8 13c.6-2.6 2.4-4 4.7-4s4.1 1.4 4.7 4M7.5 1h6.5v5M9.5 5.5l1.3 1.3 2.7-2.7" fill="none" stroke="#cccccc" stroke-width="1.1"/></svg>
<svg style="left:1892px;top:1014px" width="12" height="14"><path d="M6 1a4 4 0 0 0-4 4v4l-1.3 2h10.6L10 9V5a4 4 0 0 0-4-4zM4.5 12.5a1.5 1.5 0 0 0 3 0" fill="none" stroke="#cccccc" stroke-width="1.1"/></svg></div><div id="task" class="a"><div class="a" style="left:0;top:0;width:1920px;height:1px;background:rgba(255,255,255,.10)"></div><svg style="left:18px;top:15px" width="25" height="18" viewBox="0 0 25 18"><path d="M1 8h15M1 12h17" stroke="#9cc4e8" stroke-width="2" stroke-linecap="round"/><circle cx="13" cy="5" r="3" fill="#a9cdee"/><circle cx="19.5" cy="12.5" r="3" fill="#a9cdee"/><circle cx="16" cy="15.5" r="2.5" fill="#8fb8dc"/></svg><div class="a" style="left:29.8px;top:5.5px;width:16.2px;height:16.2px;border-radius:50%;background:#c42b1c"></div><div class="a" style="left:29.8px;top:6px;width:16.2px;text-align:center;font-size:11px;line-height:15px;color:#fff">1</div><div class="a" style="left:51px;top:9.5px;font-size:11px;line-height:14px;color:#ffffff">32°C</div><div class="a" style="left:51px;top:24.5px;font-size:12.3px;line-height:14px;color:#d6d6d6">Viento</div><svg style="left:529px;top:13px" width="23" height="23" viewBox="0 0 23 23"><defs><linearGradient id="wg" x1="0" y1="0" x2="1" y2="1"><stop offset="0" stop-color="#7fd6ff"/><stop offset="1" stop-color="#1aa0f0"/></linearGradient></defs><rect x="0" y="0" width="10.8" height="10.8" fill="url(#wg)"/><rect x="12.2" y="0" width="10.8" height="10.8" fill="url(#wg)"/><rect x="0" y="12.2" width="10.8" height="10.8" fill="url(#wg)"/><rect x="12.2" y="12.2" width="10.8" height="10.8" fill="url(#wg)"/></svg><div class="a" style="left:566px;top:9px;width:218px;height:30px;border-radius:15px;background:#f2f2f2"></div><svg style="left:577px;top:18px" width="15" height="14" viewBox="0 0 15 14"><circle cx="6" cy="6" r="4.8" fill="none" stroke="#1a1a1a" stroke-width="1.6"/><path d="M9.5 9.5l4 4" stroke="#1a1a1a" stroke-width="1.8" stroke-linecap="round"/></svg><div class="a" style="left:602px;top:16px;font-size:13.5px;line-height:17px;color:#5f5f5f">Búsqueda</div><svg style="left:758px;top:13px" width="22" height="22" viewBox="0 0 22 22"><path d="M11 1.5a9.5 9.5 0 1 1-4.5 17.9L1.5 20.5l1.2-4.5A9.5 9.5 0 0 1 11 1.5z" fill="#fff" stroke="#2a8ce8" stroke-width="1.6"/><path d="M8.5 5v11.2l5.2-2.6c1.3-.7 1.3-2.5 0-3.1L10.8 9.2" fill="none" stroke="#1f6fe0" stroke-width="2" stroke-linejoin="round"/></svg><svg style="left:796px;top:12px" width="26" height="23"><rect x="0" y="7" width="18" height="15" rx="2" fill="#5c5c5c"/><rect x="7" y="0" width="18" height="15" rx="2" fill="#e8e8e8"/><rect x="7" y="7" width="11" height="8" fill="#a0a0a0"/></svg><svg style="left:841px;top:13px" width="23" height="23" viewBox="0 0 23 23"><defs><linearGradient id="cg" x1="0" y1="0" x2="1" y2="1"><stop offset="0" stop-color="#8d7cf0"/><stop offset="1" stop-color="#5b4bc4"/></linearGradient></defs><path d="M11.5 1a10.5 10.5 0 1 1-5.5 19.5L1 22l1.5-5A10.5 10.5 0 0 1 11.5 1z" fill="url(#cg)"/><rect x="6" y="8" width="8" height="7" rx="1.5" fill="#fff"/><path d="M14.5 10.5l3-2v6l-3-2z" fill="#fff"/></svg><svg style="left:884px;top:13px" width="26" height="23" viewBox="0 0 26 23"><path d="M1 8l11-7 11 7v14H1z" fill="#1478d4"/><path d="M1 8l11 7 11-7v14H1z" fill="#32a4f0"/><path d="M4 6h16v5l-8 5-8-5z" fill="#fff"/></svg><div class="a" style="left:898px;top:6px;width:16px;height:16px;border-radius:50%;background:#4cc2ff"></div><div class="a" style="left:898px;top:6.5px;width:16px;text-align:center;font-size:11px;line-height:15px;color:#111">1</div><svg style="left:929px;top:12px" width="24" height="24" viewBox="0 0 24 24"><defs><linearGradient id="eg1" x1="0" y1="0" x2="1" y2="1"><stop offset="0" stop-color="#35c1f1"/><stop offset=".6" stop-color="#1b9de2"/><stop offset="1" stop-color="#0c59a4"/></linearGradient><linearGradient id="eg2" x1="0" y1="0" x2="1" y2="0"><stop offset="0" stop-color="#2bc77d"/><stop offset="1" stop-color="#6ad843"/></linearGradient></defs><circle cx="12" cy="12" r="11" fill="url(#eg1)"/><path d="M3 9c2-6 10-8 15-5 4 2.5 5 7 3 9.5-1.5 2-5 2-7 .5 1-2 0-5-4-5.5C7 8 4 10 3 9z" fill="url(#eg2)"/><path d="M9 12c0 4 3 7 7 7" fill="none" stroke="#0c4f95" stroke-width="3" opacity=".7"/></svg><svg style="left:977px;top:12px" width="16" height="26"><path d="M12.07 -0.39 L1.59 8.89 L7.18 15.07 L2.88 24.18 L13.62 15.33 L8.03 8.89Z" fill="#f4f4f4"/></svg><svg style="left:1016px;top:13px" width="26" height="22" viewBox="0 0 26 22"><path d="M1 3a2 2 0 0 1 2-2h6l2.5 2.5H24a1.5 1.5 0 0 1 1.5 1.5v3H1z" fill="#e6a82a"/><rect x="1" y="4.5" width="24.5" height="17" rx="1" fill="#ffd356"/><path d="M5.5 22v-6a1.5 1.5 0 0 1 1.5-1.5h10a1.5 1.5 0 0 1 1.5 1.5v6z" fill="#1b80d0"/><rect x="8" y="17.5" width="8" height="1" fill="#0d5fa8"/></svg><svg style="left:1061px;top:12px" width="24" height="24" viewBox="0 0 24 24"><rect width="24" height="24" fill="#0061fe"/><path d="M7.5 5l4.5 3-4.5 3-4.5-3zM16.5 5l4.5 3-4.5 3-4.5-3zM7.5 11l4.5 3-4.5 3-4.5-3zM16.5 11l4.5 3-4.5 3-4.5-3zM12 15l4 2.7-4 2.6-4-2.6z" fill="#fff"/></svg><svg style="left:1106px;top:12px" width="23" height="25" viewBox="0 0 23 25"><defs><linearGradient id="bg1" x1="0" y1="0" x2="1" y2="1"><stop offset="0" stop-color="#ff6a1a"/><stop offset="1" stop-color="#f12a0c"/></linearGradient></defs><path d="M4.5 0.8h14l2.3 2.6-0.6 2.2 1.3 1.6-0.4 5.2-2.6 6.3-7 5.3-7-5.3-2.6-6.3-0.4-5.2 1.3-1.6-0.6-2.2z" fill="url(#bg1)"/><path d="M5 5.5l3.5-1.3h6l3.5 1.3-0.3 2.5 0.6 2.8-2.6 3.6-2.1-0.6-1.6 1.6h-1.2l-1.6-1.6-2.1 0.6-2.6-3.6 0.6-2.8z" fill="#fff"/><path d="M7.3 8.3l2.5 0.5M15.7 8.3l-2.5 0.5M11.5 7v4.5M9.8 12l1.7 1 1.7-1" fill="none" stroke="#f04a1c" stroke-width="0.9"/><path d="M8.6 16.6l2.9-1.3 2.9 1.3-2.9 2.4z" fill="#fff"/></svg><svg style="left:1149px;top:15px" width="24" height="18" viewBox="0 0 24 18"><path d="M4 0.5h19.5L20 17.5H0.5z" fill="#3d6fd0"/><path d="M6 4l5 4.5-6 4.5" fill="none" stroke="#fff" stroke-width="1.6"/><path d="M11 13.5h5" stroke="#fff" stroke-width="1.6"/></svg><svg style="left:1193px;top:12px" width="24" height="24" viewBox="0 0 24 24"><path d="M12 12 L0.67 10.00 A11.5 11.5 0 0 1 22.42 7.14z" fill="#db4437"/><path d="M12 12 L22.42 7.14 A11.5 11.5 0 0 1 11.00 23.46z" fill="#fcc934"/><path d="M12 12 L11.00 23.46 A11.5 11.5 0 0 1 0.67 10.00z" fill="#1ea362"/><circle cx="12" cy="12" r="5.4" fill="#fff"/><circle cx="12" cy="12" r="4.3" fill="#4285f4"/></svg><svg style="left:1237px;top:12px" width="24" height="24" viewBox="0 0 24 24"><defs><linearGradient id="pg" x1="0" y1="0" x2="1" y2="1"><stop offset="0" stop-color="#5cc8f5"/><stop offset="1" stop-color="#1f8ad8"/></linearGradient></defs><path d="M11 1.5c6 0 11 4 11 9 0 3-2 4-4 4h-2c-1.5 0-2 1.5-1.5 2.5.7 1.5-.3 4.5-3.5 4.5C5 21.5 1 17 1 11.5 1 6 5 1.5 11 1.5z" fill="url(#pg)"/><circle cx="4.8" cy="11.5" r="1.9" fill="#e8542a"/><circle cx="7.5" cy="6.5" r="1.9" fill="#4cb648"/><circle cx="12.5" cy="4.8" r="1.9" fill="#fac23c"/><path d="M18.2 7.5h3.4l-0.6 3.5v12.5h-2.2V11z" fill="#b9773a"/><rect x="18.2" y="5.5" width="3.4" height="3" fill="#e8d8b8"/><path d="M11 13l1-1 1 1-1 1z" fill="#123"/></svg><svg style="left:1283px;top:14px" width="20" height="22" viewBox="0 0 20 22"><path d="M2.6 5.2C5 1.2 14.6 1.2 17 5.2" fill="none" stroke="#f2f2f2" stroke-width="2.2" stroke-linecap="round"/><ellipse cx="9.8" cy="13.4" rx="6.8" ry="5.6" fill="none" stroke="#f2f2f2" stroke-width="2.4"/></svg><svg style="left:1324px;top:14px" width="25" height="19" viewBox="0 0 25 19"><rect x="0.5" y="0.5" width="24" height="18" rx="1" fill="#54b3e8"/><rect x="2" y="3" width="21" height="13" fill="#bde3f7"/><circle cx="8" cy="9" r="4" fill="#2a7bd0"/><path d="M8 9V5a4 4 0 0 1 4 4z" fill="#f29b38"/><rect x="14" y="5" width="7" height="2" fill="#2a7bd0"/><rect x="14" y="9" width="7" height="2" fill="#2a7bd0"/><rect x="3" y="14" width="8" height="1.5" fill="#f29b38"/></svg><div class="a" style="left:1361px;top:4px;width:40px;height:39px;border-radius:4px;background:#2b2b2b"></div><svg style="left:1368px;top:12px" width="26" height="24" viewBox="0 0 100 100"><path d="M96.5 10.8 76 1c-2.4-1.2-5.2-.7-7.1 1.2L29.6 38 12.5 25c-1.6-1.2-3.8-1.1-5.3.2L1.7 30.2c-1.8 1.7-1.8 4.5 0 6.2L16.5 50 1.7 63.6c-1.8 1.7-1.8 4.5 0 6.2l5.5 5c1.5 1.3 3.7 1.4 5.3.2l17.1-13L68.9 97.8c1.9 1.9 4.7 2.4 7.1 1.2l20.5-9.9c2.1-1 3.5-3.2 3.5-5.6V16.4c0-2.4-1.4-4.6-3.5-5.6zM75 72.7 45.1 50 75 27.3v45.4z" fill="#23a6f0"/></svg><div class="a" style="left:1373px;top:40px;width:16px;height:3px;border-radius:2px;background:#4cc2ff"></div><div class="a" style="left:938.0px;top:40px;width:6px;height:3px;border-radius:2px;background:#9a9a9a"></div><div class="a" style="left:1025.7px;top:40px;width:6px;height:3px;border-radius:2px;background:#9a9a9a"></div><div class="a" style="left:1113.8px;top:40px;width:6px;height:3px;border-radius:2px;background:#9a9a9a"></div><div class="a" style="left:1157.8px;top:40px;width:6px;height:3px;border-radius:2px;background:#9a9a9a"></div><div class="a" style="left:1201.8px;top:40px;width:6px;height:3px;border-radius:2px;background:#9a9a9a"></div><div class="a" style="left:1245.8px;top:40px;width:6px;height:3px;border-radius:2px;background:#9a9a9a"></div><div class="a" style="left:1289.8px;top:40px;width:6px;height:3px;border-radius:2px;background:#9a9a9a"></div><div class="a" style="left:1333.8px;top:40px;width:6px;height:3px;border-radius:2px;background:#9a9a9a"></div><svg style="left:1728px;top:20px" width="12" height="8"><path d="M1 7l5-5 5 5" fill="none" stroke="#ffffff" stroke-width="1.4"/></svg><svg style="left:1758px;top:16px" width="17" height="16" viewBox="0 0 17 16"><path d="M11 2H1v9h13V9" fill="none" stroke="#ffffff" stroke-width="1.2"/><path d="M5 11v3M9 11v3M3 14.5h8" stroke="#ffffff" stroke-width="1.2"/><rect x="12" y="0.6" width="4" height="5" rx="2" fill="none" stroke="#ffffff" stroke-width="1.1"/><path d="M14 5.5v10" stroke="#ffffff" stroke-width="1.1"/></svg><svg style="left:1784px;top:16px" width="16" height="16" viewBox="0 0 16 16"><path d="M1 5h3l4-3.5v10L4 8H1z" fill="none" stroke="#ffffff" stroke-width="1.2" stroke-linejoin="round"/><circle cx="11" cy="11" r="4.2" fill="#ffffff"/><path d="M9.3 9.3l3.4 3.4M12.7 9.3l-3.4 3.4" stroke="#1c1b1a" stroke-width="1.1"/></svg><div class="a" style="left:1777px;top:10px;width:100px;text-align:right;font-size:12px;line-height:14px;color:#fff">10:53</div><div class="a" style="left:1777px;top:26px;width:100px;text-align:right;font-size:12px;line-height:14px;color:#fff">07/08/2023</div><div class="a" style="left:1884.5px;top:16px;width:15px;height:15px;border-radius:50%;background:#4cc2ff"></div><div class="a" style="left:1884.5px;top:16.5px;width:15px;text-align:center;font-size:10.5px;line-height:14px;color:#111">2</div></div><svg style="left:0;top:0;position:absolute" width="1920" height="1280"><rect x="331" y="774" width="1430" height="251" rx="31" ry="31" fill="none" stroke="#e22500" stroke-width="8.6"/><ellipse cx="1842" cy="1021.4" rx="35" ry="31" fill="none" stroke="#e22500" stroke-width="9"/><line x1="1290.2" y1="761" x2="1293.6" y2="536" stroke="#ff2800" stroke-width="7.4"/><path d="M1294.1 505.2 1276.7 537.8 1310.3 538.4z" fill="#ff2800"/><line x1="1846" y1="990" x2="1808" y2="734" stroke="#ff2800" stroke-width="7.4"/><path d="M1803.4 702.5 1791.9 737.8 1824 732.5z" fill="#ff2800"/></svg><div class="a" style="left:1088.5px;top:436.5px;font-size:45px;line-height:52px;color:#ff2800;transform:scaleY(1.075);transform-origin:0 0">Semgrep findings</div><div class="a" style="left:1607px;top:635.5px;font-size:45px;line-height:52px;color:#ff2800;transform:scaleY(1.075);transform-origin:0 0">Semgrep icon</div></body></html>
